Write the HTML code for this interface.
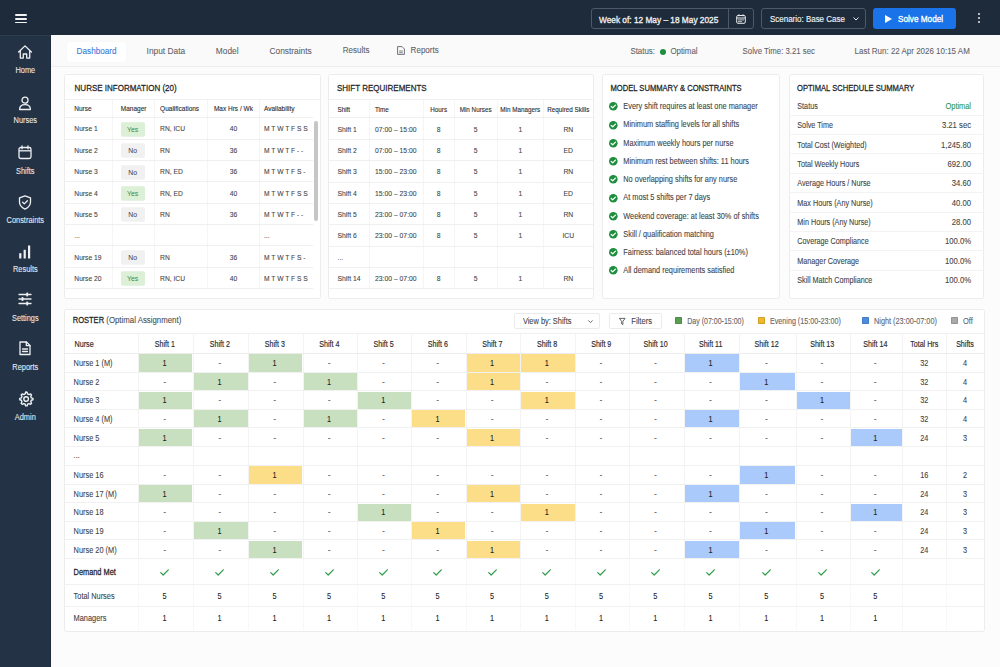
<!DOCTYPE html><html><head><meta charset="utf-8"><style>
*{margin:0;padding:0;box-sizing:border-box}
html,body{width:1000px;height:667px;overflow:hidden;background:#fcfcfc;font-family:"Liberation Sans",sans-serif}
.t{position:absolute;line-height:20px;white-space:nowrap;-webkit-text-stroke:0.08px currentColor;transform:scaleY(var(--k,1.16));transform-origin:0 10px}
.sb{-webkit-text-stroke:0.2px currentColor}
.sb2{-webkit-text-stroke:0.12px currentColor}
svg{position:absolute;overflow:visible}
</style></head><body>
<div style="position:absolute;left:0px;top:0px;width:1000px;height:35px;background:#1e2b3b"></div>
<div style="position:absolute;left:15px;top:14.4px;width:12px;height:1.5px;background:#f1f3f4;border-radius:1px"></div>
<div style="position:absolute;left:15px;top:18.1px;width:12px;height:1.5px;background:#f1f3f4;border-radius:1px"></div>
<div style="position:absolute;left:15px;top:21.9px;width:12px;height:1.5px;background:#f1f3f4;border-radius:1px"></div>
<div style="position:absolute;left:590.5px;top:8px;width:163px;height:20.6px;border:1px solid #4d5968;border-radius:3px"></div>
<div style="position:absolute;left:728px;top:8px;width:1px;height:20.6px;background:#4d5968"></div>
<div class="t" style="left:599px;top:9.50px;font-size:8.3px;color:#eef0f2;font-weight:400;-webkit-text-stroke:0.3px currentColor">Week of: 12 May – 18 May 2025</div>
<svg style="left:736px;top:14px" width="10" height="10" viewBox="0 0 10 10"><rect x="0.7" y="1.5" width="8.6" height="7.8" rx="1.2" fill="none" stroke="#e8eaed" stroke-width="1"/><line x1="0.7" y1="4" x2="9.3" y2="4" stroke="#e8eaed" stroke-width="1"/><line x1="3" y1="0.3" x2="3" y2="2.3" stroke="#e8eaed" stroke-width="1"/><line x1="7" y1="0.3" x2="7" y2="2.3" stroke="#e8eaed" stroke-width="1"/><rect x="2.3" y="5.3" width="1.4" height="1.2" fill="#e8eaed"/><rect x="4.3" y="5.3" width="1.4" height="1.2" fill="#e8eaed"/><rect x="6.3" y="5.3" width="1.4" height="1.2" fill="#e8eaed"/><rect x="2.3" y="7" width="1.4" height="1.2" fill="#e8eaed"/><rect x="4.3" y="7" width="1.4" height="1.2" fill="#e8eaed"/></svg>
<div style="position:absolute;left:761px;top:8px;width:104.5px;height:20.6px;border:1px solid #4d5968;border-radius:3px"></div>
<div class="t" style="left:770px;top:9.50px;font-size:7.98px;color:#eef0f2;font-weight:400;-webkit-text-stroke:0.14px currentColor">Scenario: Base Case</div>
<svg style="left:853px;top:17px" width="6" height="4" viewBox="0 0 6 4"><polyline points="0.5,0.5 3,3 5.5,0.5" fill="none" stroke="#e8eaed" stroke-width="1"/></svg>
<div style="position:absolute;left:873px;top:8px;width:83px;height:20.5px;background:#1a73e8;border-radius:3px"></div>
<svg style="left:885px;top:14.5px" width="7" height="8" viewBox="0 0 7 8"><polygon points="0,0 7,4 0,8" fill="#fff"/></svg>
<div class="t" style="left:898px;top:9.50px;font-size:8.2px;color:#ffffff;font-weight:400;-webkit-text-stroke:0.3px currentColor">Solve Model</div>
<div style="position:absolute;left:977.8px;top:13.299999999999999px;width:2.2px;height:2.2px;background:#e8eaed;border-radius:50%"></div>
<div style="position:absolute;left:977.8px;top:17.3px;width:2.2px;height:2.2px;background:#e8eaed;border-radius:50%"></div>
<div style="position:absolute;left:977.8px;top:21.3px;width:2.2px;height:2.2px;background:#e8eaed;border-radius:50%"></div>
<div style="position:absolute;left:0px;top:35px;width:51px;height:632px;background:#233345"></div>
<div style="position:absolute;left:0px;top:35px;width:51px;height:1px;background:#2c3d50"></div>
<div style="position:absolute;left:49.5px;top:35px;width:1.5px;height:632px;background:#1f2c3a"></div>
<svg style="left:18.2px;top:45.2px" width="14" height="14" viewBox="0 0 14 14"><path d="M0.6 7 L7 0.9 L13.4 7 M2.3 5.6 V13.1 H5.3 V9 H8.7 V13.1 H11.7 V5.6" fill="none" stroke="#eef0f2" stroke-width="1.3" stroke-linejoin="round" stroke-linecap="round"/></svg>
<div class="t" style="left:-4.70px;width:60px;text-align:center;top:60.70px;font-size:7.4px;color:#e8eaed;font-weight:400;">Home</div>
<svg style="left:18.2px;top:96.0px" width="14" height="14" viewBox="0 0 14 14"><circle cx="7" cy="4.2" r="3" fill="none" stroke="#eef0f2" stroke-width="1.3" stroke-linejoin="round" stroke-linecap="round"/><path d="M1.6 13.5 C1.6 10 4 8.6 7 8.6 C10 8.6 12.4 10 12.4 13.5 Z" fill="none" stroke="#eef0f2" stroke-width="1.3" stroke-linejoin="round" stroke-linecap="round"/></svg>
<div class="t" style="left:-4.70px;width:60px;text-align:center;top:111.30px;font-size:7.4px;color:#e8eaed;font-weight:400;">Nurses</div>
<svg style="left:18.2px;top:145.0px" width="14" height="14" viewBox="0 0 14 14"><rect x="1" y="2.5" width="12" height="11" rx="1.8" fill="none" stroke="#eef0f2" stroke-width="1.3" stroke-linejoin="round" stroke-linecap="round"/><line x1="1" y1="5.8" x2="13" y2="5.8" stroke="#eef0f2" stroke-width="1.3"/><line x1="4" y1="0.8" x2="4" y2="3.8" fill="none" stroke="#eef0f2" stroke-width="1.3" stroke-linejoin="round" stroke-linecap="round"/><line x1="10" y1="0.8" x2="10" y2="3.8" fill="none" stroke="#eef0f2" stroke-width="1.3" stroke-linejoin="round" stroke-linecap="round"/></svg>
<div class="t" style="left:-4.70px;width:60px;text-align:center;top:161.50px;font-size:7.4px;color:#e8eaed;font-weight:400;">Shifts</div>
<svg style="left:18.2px;top:194.5px" width="14" height="14" viewBox="0 0 14 14"><path d="M7 0.8 L12.5 2.8 V7 C12.5 10.5 10 12.8 7 14.2 C4 12.8 1.5 10.5 1.5 7 V2.8 Z" fill="none" stroke="#eef0f2" stroke-width="1.3" stroke-linejoin="round" stroke-linecap="round"/><polyline points="4.6,7.3 6.3,8.9 9.4,5.8" fill="none" stroke="#eef0f2" stroke-width="1.3" stroke-linejoin="round" stroke-linecap="round"/></svg>
<div class="t" style="left:-4.70px;width:60px;text-align:center;top:211.00px;font-size:7.4px;color:#e8eaed;font-weight:400;">Constraints</div>
<svg style="left:18.2px;top:244.5px" width="14" height="14" viewBox="0 0 14 14"><rect x="1.2" y="8.2" width="2.2" height="5.3" fill="#eef0f2"/><rect x="5.6" y="4.8" width="2.2" height="8.7" fill="#eef0f2"/><rect x="10" y="0.5" width="2.2" height="13" fill="#eef0f2"/></svg>
<div class="t" style="left:-4.70px;width:60px;text-align:center;top:260.30px;font-size:7.4px;color:#e8eaed;font-weight:400;">Results</div>
<svg style="left:18.2px;top:292.0px" width="14" height="14" viewBox="0 0 14 14"><line x1="1" y1="2.5" x2="13" y2="2.5" fill="none" stroke="#eef0f2" stroke-width="1.3" stroke-linejoin="round" stroke-linecap="round"/><line x1="1" y1="7" x2="13" y2="7" fill="none" stroke="#eef0f2" stroke-width="1.3" stroke-linejoin="round" stroke-linecap="round"/><line x1="1" y1="11.5" x2="13" y2="11.5" fill="none" stroke="#eef0f2" stroke-width="1.3" stroke-linejoin="round" stroke-linecap="round"/><rect x="8.3" y="0.6" width="1.8" height="3.8" fill="#eef0f2"/><rect x="3.6" y="5.1" width="1.8" height="3.8" fill="#eef0f2"/><rect x="8.3" y="9.6" width="1.8" height="3.8" fill="#eef0f2"/></svg>
<div class="t" style="left:-4.70px;width:60px;text-align:center;top:308.50px;font-size:7.4px;color:#e8eaed;font-weight:400;">Settings</div>
<svg style="left:18.2px;top:340.5px" width="14" height="14" viewBox="0 0 14 14"><path d="M2 1 H8.5 L12 4.5 V13.5 H2 Z" fill="none" stroke="#eef0f2" stroke-width="1.3" stroke-linejoin="round" stroke-linecap="round"/><polyline points="8.3,1 8.3,4.7 12,4.7" fill="none" stroke="#eef0f2" stroke-width="1.3" stroke-linejoin="round" stroke-linecap="round"/><line x1="4.5" y1="8" x2="9.5" y2="8" fill="none" stroke="#eef0f2" stroke-width="1.3" stroke-linejoin="round" stroke-linecap="round"/><line x1="4.5" y1="10.5" x2="9.5" y2="10.5" fill="none" stroke="#eef0f2" stroke-width="1.3" stroke-linejoin="round" stroke-linecap="round"/></svg>
<div class="t" style="left:-4.70px;width:60px;text-align:center;top:357.50px;font-size:7.4px;color:#e8eaed;font-weight:400;">Reports</div>
<svg style="left:17.5px;top:390.9px" width="15.4" height="15.4" viewBox="0 0 14 14"><path d="M7 0.9 L8.3 1.2 L8.7 2.7 L10 3.3 L11.4 2.6 L12.3 3.6 L11.6 5 L12.1 6.3 L13.6 6.7 V8 L12.1 8.4 L11.6 9.7 L12.3 11.1 L11.4 12.1 L10 11.4 L8.7 12 L8.3 13.5 H6.9 L6.5 12 L5.2 11.4 L3.8 12.1 L2.9 11.1 L3.6 9.7 L3.1 8.4 L1.6 8 V6.7 L3.1 6.3 L3.6 5 L2.9 3.6 L3.8 2.6 L5.2 3.3 L6.5 2.7 L6.9 1.2 Z" fill="none" stroke="#eef0f2" stroke-width="1.3" stroke-linejoin="round" stroke-linecap="round"/><circle cx="7.4" cy="7.3" r="2.1" fill="none" stroke="#eef0f2" stroke-width="1.3" stroke-linejoin="round" stroke-linecap="round"/></svg>
<div class="t" style="left:-4.70px;width:60px;text-align:center;top:407.50px;font-size:7.4px;color:#e8eaed;font-weight:400;">Admin</div>
<div style="position:absolute;left:51px;top:35px;width:949px;height:31.8px;background:#fafafa;border-bottom:1px solid #eeeeee"></div>
<div style="position:absolute;left:66.5px;top:42px;width:59.5px;height:19.6px;background:#ffffff;box-shadow:0 0 1px rgba(0,0,0,0.08);border-radius:1.5px"></div>
<div class="t" style="left:76.6px;top:41.80px;font-size:8.18px;color:#3b78d8;font-weight:400;">Dashboard</div>
<div class="t" style="left:146.6px;top:41.30px;font-size:8.35px;color:#5f6368;font-weight:400;">Input Data</div>
<div class="t" style="left:215.8px;top:41.30px;font-size:8.35px;color:#5f6368;font-weight:400;">Model</div>
<div class="t" style="left:269.5px;top:41.30px;font-size:8.35px;color:#5f6368;font-weight:400;">Constraints</div>
<div class="t" style="left:342.8px;top:41.30px;font-size:8.0px;color:#5f6368;font-weight:400;">Results</div>
<svg style="left:397px;top:45.8px" width="8" height="9" viewBox="0 0 8 9"><path d="M0.6 0.6 H5 L7.4 3 V8.4 H0.6 Z" fill="none" stroke="#5f6368" stroke-width="0.9"/><line x1="2.2" y1="5" x2="5.8" y2="5" stroke="#5f6368" stroke-width="0.8"/><line x1="2.2" y1="6.7" x2="5.8" y2="6.7" stroke="#5f6368" stroke-width="0.8"/></svg>
<div class="t" style="left:410.6px;top:41.30px;font-size:8.05px;color:#5f6368;font-weight:400;">Reports</div>
<div class="t" style="left:630.4px;top:42.00px;font-size:7.9px;color:#5f6368;font-weight:400;">Status:</div>
<div style="position:absolute;left:659.6px;top:48.5px;width:6px;height:6px;background:#1e8e3e;border-radius:50%"></div>
<div class="t" style="left:670.4px;top:42.00px;font-size:7.9px;color:#5f6368;font-weight:400;">Optimal</div>
<div class="t" style="left:742.6px;top:42.00px;font-size:7.8px;color:#5f6368;font-weight:400;">Solve Time: 3.21 sec</div>
<div class="t" style="left:854.6px;top:42.00px;font-size:7.98px;color:#5f6368;font-weight:400;">Last Run: 22 Apr 2026 10:15 AM</div>
<div style="position:absolute;left:64px;top:74px;width:256.5px;height:225px;background:#ffffff;border:1px solid #ececec;border-radius:2.5px"></div>
<div class="t" style="left:74.6px;top:78.70px;font-size:8.0px;color:#232528;font-weight:400;-webkit-text-stroke:0.22px currentColor">NURSE INFORMATION (20)</div>
<div style="position:absolute;left:64px;top:99.2px;width:256.5px;height:1px;background:#f0f0f0"></div>
<div style="position:absolute;left:64px;top:117.19999999999999px;width:248.70000000000002px;height:1px;background:#f0f0f0"></div>
<div style="position:absolute;left:112.2px;top:99.6px;width:1px;height:17.6px;background:#f5f5f5"></div>
<div class="t" style="left:74.3px;top:99.40px;font-size:6.5px;color:#2a2d30;font-weight:400;-webkit-text-stroke:0.1px currentColor">Nurse</div>
<div style="position:absolute;left:154.1px;top:99.6px;width:1px;height:17.6px;background:#f5f5f5"></div>
<div class="t" style="left:112.70px;width:41.9px;text-align:center;top:99.40px;font-size:6.5px;color:#2a2d30;font-weight:400;-webkit-text-stroke:0.1px currentColor">Manager</div>
<div style="position:absolute;left:206.8px;top:99.6px;width:1px;height:17.6px;background:#f5f5f5"></div>
<div class="t" style="left:160.1px;top:99.40px;font-size:6.5px;color:#2a2d30;font-weight:400;-webkit-text-stroke:0.1px currentColor">Qualifications</div>
<div style="position:absolute;left:259.0px;top:99.6px;width:1px;height:17.6px;background:#f5f5f5"></div>
<div class="t" style="left:207.30px;width:52.2px;text-align:center;top:99.40px;font-size:6.5px;color:#2a2d30;font-weight:400;-webkit-text-stroke:0.1px currentColor">Max Hrs / Wk</div>
<div class="t" style="left:264.0px;top:99.40px;font-size:6.5px;color:#2a2d30;font-weight:400;-webkit-text-stroke:0.1px currentColor">Availability</div>
<div style="position:absolute;left:64px;top:138.57999999999998px;width:248.70000000000002px;height:1px;background:#f0f0f0"></div>
<div style="position:absolute;left:112.2px;top:118.19999999999999px;width:1px;height:20.38px;background:#f5f5f5"></div>
<div class="t" style="left:74.3px;top:119.39px;font-size:6.7px;color:#404347;font-weight:400;">Nurse 1</div>
<div style="position:absolute;left:154.1px;top:118.19999999999999px;width:1px;height:20.38px;background:#f5f5f5"></div>
<div style="position:absolute;left:120.8px;top:118.19999999999999px;width:23.8px;height:13.2px;margin-top:4.6px;background:#dcefd7;border-radius:1.5px;color:#3d8b40;font-size:6.9px;line-height:13.2px;text-align:center;transform:scaleY(1.12)">Yes</div>
<div style="position:absolute;left:206.8px;top:118.19999999999999px;width:1px;height:20.38px;background:#f5f5f5"></div>
<div class="t" style="left:160.1px;top:119.39px;font-size:6.7px;color:#404347;font-weight:400;">RN, ICU</div>
<div style="position:absolute;left:259.0px;top:118.19999999999999px;width:1px;height:20.38px;background:#f5f5f5"></div>
<div class="t" style="left:207.30px;width:52.2px;text-align:center;top:119.39px;font-size:6.7px;color:#404347;font-weight:400;">40</div>
<div class="t" style="left:264.0px;top:119.39px;font-size:6.7px;color:#404347;font-weight:400;">M T W T F S S</div>
<div style="position:absolute;left:64px;top:159.95999999999998px;width:248.70000000000002px;height:1px;background:#f0f0f0"></div>
<div style="position:absolute;left:112.2px;top:139.57999999999998px;width:1px;height:20.38px;background:#f5f5f5"></div>
<div class="t" style="left:74.3px;top:140.77px;font-size:6.7px;color:#404347;font-weight:400;">Nurse 2</div>
<div style="position:absolute;left:154.1px;top:139.57999999999998px;width:1px;height:20.38px;background:#f5f5f5"></div>
<div style="position:absolute;left:120.8px;top:139.57999999999998px;width:23.8px;height:13.2px;margin-top:4.6px;background:#f1f1f2;border-radius:1.5px;color:#3c4043;font-size:6.9px;line-height:13.2px;text-align:center;transform:scaleY(1.12)">No</div>
<div style="position:absolute;left:206.8px;top:139.57999999999998px;width:1px;height:20.38px;background:#f5f5f5"></div>
<div class="t" style="left:160.1px;top:140.77px;font-size:6.7px;color:#404347;font-weight:400;">RN</div>
<div style="position:absolute;left:259.0px;top:139.57999999999998px;width:1px;height:20.38px;background:#f5f5f5"></div>
<div class="t" style="left:207.30px;width:52.2px;text-align:center;top:140.77px;font-size:6.7px;color:#404347;font-weight:400;">36</div>
<div class="t" style="left:264.0px;top:140.77px;font-size:6.7px;color:#404347;font-weight:400;">M T W T F - -</div>
<div style="position:absolute;left:64px;top:181.33999999999997px;width:248.70000000000002px;height:1px;background:#f0f0f0"></div>
<div style="position:absolute;left:112.2px;top:160.95999999999998px;width:1px;height:20.38px;background:#f5f5f5"></div>
<div class="t" style="left:74.3px;top:162.15px;font-size:6.7px;color:#404347;font-weight:400;">Nurse 3</div>
<div style="position:absolute;left:154.1px;top:160.95999999999998px;width:1px;height:20.38px;background:#f5f5f5"></div>
<div style="position:absolute;left:120.8px;top:160.95999999999998px;width:23.8px;height:13.2px;margin-top:4.6px;background:#f1f1f2;border-radius:1.5px;color:#3c4043;font-size:6.9px;line-height:13.2px;text-align:center;transform:scaleY(1.12)">No</div>
<div style="position:absolute;left:206.8px;top:160.95999999999998px;width:1px;height:20.38px;background:#f5f5f5"></div>
<div class="t" style="left:160.1px;top:162.15px;font-size:6.7px;color:#404347;font-weight:400;">RN, ED</div>
<div style="position:absolute;left:259.0px;top:160.95999999999998px;width:1px;height:20.38px;background:#f5f5f5"></div>
<div class="t" style="left:207.30px;width:52.2px;text-align:center;top:162.15px;font-size:6.7px;color:#404347;font-weight:400;">36</div>
<div class="t" style="left:264.0px;top:162.15px;font-size:6.7px;color:#404347;font-weight:400;">M T W T F S -</div>
<div style="position:absolute;left:64px;top:202.71999999999997px;width:248.70000000000002px;height:1px;background:#f0f0f0"></div>
<div style="position:absolute;left:112.2px;top:182.33999999999997px;width:1px;height:20.38px;background:#f5f5f5"></div>
<div class="t" style="left:74.3px;top:183.53px;font-size:6.7px;color:#404347;font-weight:400;">Nurse 4</div>
<div style="position:absolute;left:154.1px;top:182.33999999999997px;width:1px;height:20.38px;background:#f5f5f5"></div>
<div style="position:absolute;left:120.8px;top:182.33999999999997px;width:23.8px;height:13.2px;margin-top:4.6px;background:#dcefd7;border-radius:1.5px;color:#3d8b40;font-size:6.9px;line-height:13.2px;text-align:center;transform:scaleY(1.12)">Yes</div>
<div style="position:absolute;left:206.8px;top:182.33999999999997px;width:1px;height:20.38px;background:#f5f5f5"></div>
<div class="t" style="left:160.1px;top:183.53px;font-size:6.7px;color:#404347;font-weight:400;">RN, ED</div>
<div style="position:absolute;left:259.0px;top:182.33999999999997px;width:1px;height:20.38px;background:#f5f5f5"></div>
<div class="t" style="left:207.30px;width:52.2px;text-align:center;top:183.53px;font-size:6.7px;color:#404347;font-weight:400;">40</div>
<div class="t" style="left:264.0px;top:183.53px;font-size:6.7px;color:#404347;font-weight:400;">M T W T F S S</div>
<div style="position:absolute;left:64px;top:224.09999999999997px;width:248.70000000000002px;height:1px;background:#f0f0f0"></div>
<div style="position:absolute;left:112.2px;top:203.71999999999997px;width:1px;height:20.38px;background:#f5f5f5"></div>
<div class="t" style="left:74.3px;top:204.91px;font-size:6.7px;color:#404347;font-weight:400;">Nurse 5</div>
<div style="position:absolute;left:154.1px;top:203.71999999999997px;width:1px;height:20.38px;background:#f5f5f5"></div>
<div style="position:absolute;left:120.8px;top:203.71999999999997px;width:23.8px;height:13.2px;margin-top:4.6px;background:#f1f1f2;border-radius:1.5px;color:#3c4043;font-size:6.9px;line-height:13.2px;text-align:center;transform:scaleY(1.12)">No</div>
<div style="position:absolute;left:206.8px;top:203.71999999999997px;width:1px;height:20.38px;background:#f5f5f5"></div>
<div class="t" style="left:160.1px;top:204.91px;font-size:6.7px;color:#404347;font-weight:400;">RN</div>
<div style="position:absolute;left:259.0px;top:203.71999999999997px;width:1px;height:20.38px;background:#f5f5f5"></div>
<div class="t" style="left:207.30px;width:52.2px;text-align:center;top:204.91px;font-size:6.7px;color:#404347;font-weight:400;">36</div>
<div class="t" style="left:264.0px;top:204.91px;font-size:6.7px;color:#404347;font-weight:400;">M T W T F - -</div>
<div style="position:absolute;left:64px;top:245.47999999999996px;width:248.70000000000002px;height:1px;background:#f0f0f0"></div>
<div style="position:absolute;left:112.2px;top:225.09999999999997px;width:1px;height:20.38px;background:#f5f5f5"></div>
<div class="t" style="left:74.3px;top:226.29px;font-size:6.7px;color:#404347;font-weight:400;">...</div>
<div style="position:absolute;left:154.1px;top:225.09999999999997px;width:1px;height:20.38px;background:#f5f5f5"></div>
<div style="position:absolute;left:206.8px;top:225.09999999999997px;width:1px;height:20.38px;background:#f5f5f5"></div>
<div style="position:absolute;left:259.0px;top:225.09999999999997px;width:1px;height:20.38px;background:#f5f5f5"></div>
<div class="t" style="left:264.0px;top:226.29px;font-size:6.7px;color:#404347;font-weight:400;">...</div>
<div style="position:absolute;left:64px;top:266.85999999999996px;width:248.70000000000002px;height:1px;background:#f0f0f0"></div>
<div style="position:absolute;left:112.2px;top:246.47999999999996px;width:1px;height:20.38px;background:#f5f5f5"></div>
<div class="t" style="left:74.3px;top:247.67px;font-size:6.7px;color:#404347;font-weight:400;">Nurse 19</div>
<div style="position:absolute;left:154.1px;top:246.47999999999996px;width:1px;height:20.38px;background:#f5f5f5"></div>
<div style="position:absolute;left:120.8px;top:246.47999999999996px;width:23.8px;height:13.2px;margin-top:4.6px;background:#f1f1f2;border-radius:1.5px;color:#3c4043;font-size:6.9px;line-height:13.2px;text-align:center;transform:scaleY(1.12)">No</div>
<div style="position:absolute;left:206.8px;top:246.47999999999996px;width:1px;height:20.38px;background:#f5f5f5"></div>
<div class="t" style="left:160.1px;top:247.67px;font-size:6.7px;color:#404347;font-weight:400;">RN</div>
<div style="position:absolute;left:259.0px;top:246.47999999999996px;width:1px;height:20.38px;background:#f5f5f5"></div>
<div class="t" style="left:207.30px;width:52.2px;text-align:center;top:247.67px;font-size:6.7px;color:#404347;font-weight:400;">36</div>
<div class="t" style="left:264.0px;top:247.67px;font-size:6.7px;color:#404347;font-weight:400;">M T W T F S -</div>
<div style="position:absolute;left:64px;top:288.23999999999995px;width:248.70000000000002px;height:1px;background:#f0f0f0"></div>
<div style="position:absolute;left:112.2px;top:267.85999999999996px;width:1px;height:20.38px;background:#f5f5f5"></div>
<div class="t" style="left:74.3px;top:269.05px;font-size:6.7px;color:#404347;font-weight:400;">Nurse 20</div>
<div style="position:absolute;left:154.1px;top:267.85999999999996px;width:1px;height:20.38px;background:#f5f5f5"></div>
<div style="position:absolute;left:120.8px;top:267.85999999999996px;width:23.8px;height:13.2px;margin-top:4.6px;background:#dcefd7;border-radius:1.5px;color:#3d8b40;font-size:6.9px;line-height:13.2px;text-align:center;transform:scaleY(1.12)">Yes</div>
<div style="position:absolute;left:206.8px;top:267.85999999999996px;width:1px;height:20.38px;background:#f5f5f5"></div>
<div class="t" style="left:160.1px;top:269.05px;font-size:6.7px;color:#404347;font-weight:400;">RN, ICU</div>
<div style="position:absolute;left:259.0px;top:267.85999999999996px;width:1px;height:20.38px;background:#f5f5f5"></div>
<div class="t" style="left:207.30px;width:52.2px;text-align:center;top:269.05px;font-size:6.7px;color:#404347;font-weight:400;">40</div>
<div class="t" style="left:264.0px;top:269.05px;font-size:6.7px;color:#404347;font-weight:400;">M T W T F S S</div>
<div style="position:absolute;left:313.8px;top:121px;width:4.2px;height:100px;background:#c6c6c6;border-radius:2px"></div>
<div style="position:absolute;left:327.5px;top:74px;width:266.5px;height:225px;background:#ffffff;border:1px solid #ececec;border-radius:2.5px"></div>
<div class="t" style="left:337px;top:78.70px;font-size:8.0px;color:#232528;font-weight:400;-webkit-text-stroke:0.22px currentColor">SHIFT REQUIREMENTS</div>
<div style="position:absolute;left:327.5px;top:99.2px;width:266.5px;height:1px;background:#f0f0f0"></div>
<div style="position:absolute;left:327.5px;top:117.39999999999999px;width:265.5px;height:1px;background:#f0f0f0"></div>
<div style="position:absolute;left:369.0px;top:99.6px;width:1px;height:17.8px;background:#f5f5f5"></div>
<div class="t" style="left:337.5px;top:99.50px;font-size:6.3px;color:#2a2d30;font-weight:400;-webkit-text-stroke:0.1px currentColor">Shift</div>
<div style="position:absolute;left:422.5px;top:99.6px;width:1px;height:17.8px;background:#f5f5f5"></div>
<div class="t" style="left:375.0px;top:99.50px;font-size:6.3px;color:#2a2d30;font-weight:400;-webkit-text-stroke:0.1px currentColor">Time</div>
<div style="position:absolute;left:453.8px;top:99.6px;width:1px;height:17.8px;background:#f5f5f5"></div>
<div class="t" style="left:423.00px;width:31.3px;text-align:center;top:99.50px;font-size:6.3px;color:#2a2d30;font-weight:400;-webkit-text-stroke:0.1px currentColor">Hours</div>
<div style="position:absolute;left:496.5px;top:99.6px;width:1px;height:17.8px;background:#f5f5f5"></div>
<div class="t" style="left:454.30px;width:42.7px;text-align:center;top:99.50px;font-size:6.3px;color:#2a2d30;font-weight:400;-webkit-text-stroke:0.1px currentColor">Min Nurses</div>
<div style="position:absolute;left:543.1px;top:99.6px;width:1px;height:17.8px;background:#f5f5f5"></div>
<div class="t" style="left:497.00px;width:46.6px;text-align:center;top:99.50px;font-size:6.3px;color:#2a2d30;font-weight:400;-webkit-text-stroke:0.1px currentColor">Min Managers</div>
<div class="t" style="left:543.60px;width:49.4px;text-align:center;top:99.50px;font-size:6.3px;color:#2a2d30;font-weight:400;-webkit-text-stroke:0.1px currentColor">Required Skills</div>
<div style="position:absolute;left:327.5px;top:138.78px;width:265.5px;height:1px;background:#f0f0f0"></div>
<div style="position:absolute;left:369.0px;top:118.39999999999999px;width:1px;height:20.38px;background:#f5f5f5"></div>
<div class="t" style="left:337.5px;top:119.59px;font-size:6.8px;color:#404347;font-weight:400;">Shift 1</div>
<div style="position:absolute;left:422.5px;top:118.39999999999999px;width:1px;height:20.38px;background:#f5f5f5"></div>
<div class="t" style="left:375.0px;top:119.59px;font-size:6.8px;color:#404347;font-weight:400;">07:00 – 15:00</div>
<div style="position:absolute;left:453.8px;top:118.39999999999999px;width:1px;height:20.38px;background:#f5f5f5"></div>
<div class="t" style="left:423.00px;width:31.3px;text-align:center;top:119.59px;font-size:6.8px;color:#404347;font-weight:400;">8</div>
<div style="position:absolute;left:496.5px;top:118.39999999999999px;width:1px;height:20.38px;background:#f5f5f5"></div>
<div class="t" style="left:454.30px;width:42.7px;text-align:center;top:119.59px;font-size:6.8px;color:#404347;font-weight:400;">5</div>
<div style="position:absolute;left:543.1px;top:118.39999999999999px;width:1px;height:20.38px;background:#f5f5f5"></div>
<div class="t" style="left:497.00px;width:46.6px;text-align:center;top:119.59px;font-size:6.8px;color:#404347;font-weight:400;">1</div>
<div class="t" style="left:543.60px;width:49.4px;text-align:center;top:119.59px;font-size:6.8px;color:#404347;font-weight:400;">RN</div>
<div style="position:absolute;left:327.5px;top:160.16px;width:265.5px;height:1px;background:#f0f0f0"></div>
<div style="position:absolute;left:369.0px;top:139.78px;width:1px;height:20.38px;background:#f5f5f5"></div>
<div class="t" style="left:337.5px;top:140.97px;font-size:6.8px;color:#404347;font-weight:400;">Shift 2</div>
<div style="position:absolute;left:422.5px;top:139.78px;width:1px;height:20.38px;background:#f5f5f5"></div>
<div class="t" style="left:375.0px;top:140.97px;font-size:6.8px;color:#404347;font-weight:400;">07:00 – 15:00</div>
<div style="position:absolute;left:453.8px;top:139.78px;width:1px;height:20.38px;background:#f5f5f5"></div>
<div class="t" style="left:423.00px;width:31.3px;text-align:center;top:140.97px;font-size:6.8px;color:#404347;font-weight:400;">8</div>
<div style="position:absolute;left:496.5px;top:139.78px;width:1px;height:20.38px;background:#f5f5f5"></div>
<div class="t" style="left:454.30px;width:42.7px;text-align:center;top:140.97px;font-size:6.8px;color:#404347;font-weight:400;">5</div>
<div style="position:absolute;left:543.1px;top:139.78px;width:1px;height:20.38px;background:#f5f5f5"></div>
<div class="t" style="left:497.00px;width:46.6px;text-align:center;top:140.97px;font-size:6.8px;color:#404347;font-weight:400;">1</div>
<div class="t" style="left:543.60px;width:49.4px;text-align:center;top:140.97px;font-size:6.8px;color:#404347;font-weight:400;">ED</div>
<div style="position:absolute;left:327.5px;top:181.54px;width:265.5px;height:1px;background:#f0f0f0"></div>
<div style="position:absolute;left:369.0px;top:161.16px;width:1px;height:20.38px;background:#f5f5f5"></div>
<div class="t" style="left:337.5px;top:162.35px;font-size:6.8px;color:#404347;font-weight:400;">Shift 3</div>
<div style="position:absolute;left:422.5px;top:161.16px;width:1px;height:20.38px;background:#f5f5f5"></div>
<div class="t" style="left:375.0px;top:162.35px;font-size:6.8px;color:#404347;font-weight:400;">15:00 – 23:00</div>
<div style="position:absolute;left:453.8px;top:161.16px;width:1px;height:20.38px;background:#f5f5f5"></div>
<div class="t" style="left:423.00px;width:31.3px;text-align:center;top:162.35px;font-size:6.8px;color:#404347;font-weight:400;">8</div>
<div style="position:absolute;left:496.5px;top:161.16px;width:1px;height:20.38px;background:#f5f5f5"></div>
<div class="t" style="left:454.30px;width:42.7px;text-align:center;top:162.35px;font-size:6.8px;color:#404347;font-weight:400;">5</div>
<div style="position:absolute;left:543.1px;top:161.16px;width:1px;height:20.38px;background:#f5f5f5"></div>
<div class="t" style="left:497.00px;width:46.6px;text-align:center;top:162.35px;font-size:6.8px;color:#404347;font-weight:400;">1</div>
<div class="t" style="left:543.60px;width:49.4px;text-align:center;top:162.35px;font-size:6.8px;color:#404347;font-weight:400;">RN</div>
<div style="position:absolute;left:327.5px;top:202.92px;width:265.5px;height:1px;background:#f0f0f0"></div>
<div style="position:absolute;left:369.0px;top:182.54px;width:1px;height:20.38px;background:#f5f5f5"></div>
<div class="t" style="left:337.5px;top:183.73px;font-size:6.8px;color:#404347;font-weight:400;">Shift 4</div>
<div style="position:absolute;left:422.5px;top:182.54px;width:1px;height:20.38px;background:#f5f5f5"></div>
<div class="t" style="left:375.0px;top:183.73px;font-size:6.8px;color:#404347;font-weight:400;">15:00 – 23:00</div>
<div style="position:absolute;left:453.8px;top:182.54px;width:1px;height:20.38px;background:#f5f5f5"></div>
<div class="t" style="left:423.00px;width:31.3px;text-align:center;top:183.73px;font-size:6.8px;color:#404347;font-weight:400;">8</div>
<div style="position:absolute;left:496.5px;top:182.54px;width:1px;height:20.38px;background:#f5f5f5"></div>
<div class="t" style="left:454.30px;width:42.7px;text-align:center;top:183.73px;font-size:6.8px;color:#404347;font-weight:400;">5</div>
<div style="position:absolute;left:543.1px;top:182.54px;width:1px;height:20.38px;background:#f5f5f5"></div>
<div class="t" style="left:497.00px;width:46.6px;text-align:center;top:183.73px;font-size:6.8px;color:#404347;font-weight:400;">1</div>
<div class="t" style="left:543.60px;width:49.4px;text-align:center;top:183.73px;font-size:6.8px;color:#404347;font-weight:400;">ED</div>
<div style="position:absolute;left:327.5px;top:224.29999999999998px;width:265.5px;height:1px;background:#f0f0f0"></div>
<div style="position:absolute;left:369.0px;top:203.92px;width:1px;height:20.38px;background:#f5f5f5"></div>
<div class="t" style="left:337.5px;top:205.11px;font-size:6.8px;color:#404347;font-weight:400;">Shift 5</div>
<div style="position:absolute;left:422.5px;top:203.92px;width:1px;height:20.38px;background:#f5f5f5"></div>
<div class="t" style="left:375.0px;top:205.11px;font-size:6.8px;color:#404347;font-weight:400;">23:00 – 07:00</div>
<div style="position:absolute;left:453.8px;top:203.92px;width:1px;height:20.38px;background:#f5f5f5"></div>
<div class="t" style="left:423.00px;width:31.3px;text-align:center;top:205.11px;font-size:6.8px;color:#404347;font-weight:400;">8</div>
<div style="position:absolute;left:496.5px;top:203.92px;width:1px;height:20.38px;background:#f5f5f5"></div>
<div class="t" style="left:454.30px;width:42.7px;text-align:center;top:205.11px;font-size:6.8px;color:#404347;font-weight:400;">5</div>
<div style="position:absolute;left:543.1px;top:203.92px;width:1px;height:20.38px;background:#f5f5f5"></div>
<div class="t" style="left:497.00px;width:46.6px;text-align:center;top:205.11px;font-size:6.8px;color:#404347;font-weight:400;">1</div>
<div class="t" style="left:543.60px;width:49.4px;text-align:center;top:205.11px;font-size:6.8px;color:#404347;font-weight:400;">RN</div>
<div style="position:absolute;left:327.5px;top:245.67999999999998px;width:265.5px;height:1px;background:#f0f0f0"></div>
<div style="position:absolute;left:369.0px;top:225.29999999999998px;width:1px;height:20.38px;background:#f5f5f5"></div>
<div class="t" style="left:337.5px;top:226.49px;font-size:6.8px;color:#404347;font-weight:400;">Shift 6</div>
<div style="position:absolute;left:422.5px;top:225.29999999999998px;width:1px;height:20.38px;background:#f5f5f5"></div>
<div class="t" style="left:375.0px;top:226.49px;font-size:6.8px;color:#404347;font-weight:400;">23:00 – 07:00</div>
<div style="position:absolute;left:453.8px;top:225.29999999999998px;width:1px;height:20.38px;background:#f5f5f5"></div>
<div class="t" style="left:423.00px;width:31.3px;text-align:center;top:226.49px;font-size:6.8px;color:#404347;font-weight:400;">8</div>
<div style="position:absolute;left:496.5px;top:225.29999999999998px;width:1px;height:20.38px;background:#f5f5f5"></div>
<div class="t" style="left:454.30px;width:42.7px;text-align:center;top:226.49px;font-size:6.8px;color:#404347;font-weight:400;">5</div>
<div style="position:absolute;left:543.1px;top:225.29999999999998px;width:1px;height:20.38px;background:#f5f5f5"></div>
<div class="t" style="left:497.00px;width:46.6px;text-align:center;top:226.49px;font-size:6.8px;color:#404347;font-weight:400;">1</div>
<div class="t" style="left:543.60px;width:49.4px;text-align:center;top:226.49px;font-size:6.8px;color:#404347;font-weight:400;">ICU</div>
<div style="position:absolute;left:327.5px;top:267.06px;width:265.5px;height:1px;background:#f0f0f0"></div>
<div style="position:absolute;left:369.0px;top:246.67999999999998px;width:1px;height:20.38px;background:#f5f5f5"></div>
<div class="t" style="left:337.5px;top:247.87px;font-size:6.8px;color:#404347;font-weight:400;">...</div>
<div style="position:absolute;left:422.5px;top:246.67999999999998px;width:1px;height:20.38px;background:#f5f5f5"></div>
<div style="position:absolute;left:453.8px;top:246.67999999999998px;width:1px;height:20.38px;background:#f5f5f5"></div>
<div style="position:absolute;left:496.5px;top:246.67999999999998px;width:1px;height:20.38px;background:#f5f5f5"></div>
<div style="position:absolute;left:543.1px;top:246.67999999999998px;width:1px;height:20.38px;background:#f5f5f5"></div>
<div style="position:absolute;left:327.5px;top:288.44px;width:265.5px;height:1px;background:#f0f0f0"></div>
<div style="position:absolute;left:369.0px;top:268.06px;width:1px;height:20.38px;background:#f5f5f5"></div>
<div class="t" style="left:337.5px;top:269.25px;font-size:6.8px;color:#404347;font-weight:400;">Shift 14</div>
<div style="position:absolute;left:422.5px;top:268.06px;width:1px;height:20.38px;background:#f5f5f5"></div>
<div class="t" style="left:375.0px;top:269.25px;font-size:6.8px;color:#404347;font-weight:400;">23:00 – 07:00</div>
<div style="position:absolute;left:453.8px;top:268.06px;width:1px;height:20.38px;background:#f5f5f5"></div>
<div class="t" style="left:423.00px;width:31.3px;text-align:center;top:269.25px;font-size:6.8px;color:#404347;font-weight:400;">8</div>
<div style="position:absolute;left:496.5px;top:268.06px;width:1px;height:20.38px;background:#f5f5f5"></div>
<div class="t" style="left:454.30px;width:42.7px;text-align:center;top:269.25px;font-size:6.8px;color:#404347;font-weight:400;">5</div>
<div style="position:absolute;left:543.1px;top:268.06px;width:1px;height:20.38px;background:#f5f5f5"></div>
<div class="t" style="left:497.00px;width:46.6px;text-align:center;top:269.25px;font-size:6.8px;color:#404347;font-weight:400;">1</div>
<div class="t" style="left:543.60px;width:49.4px;text-align:center;top:269.25px;font-size:6.8px;color:#404347;font-weight:400;">RN</div>
<div style="position:absolute;left:602px;top:74px;width:178px;height:225px;background:#ffffff;border:1px solid #ececec;border-radius:2.5px"></div>
<div class="t" style="left:610.5px;top:78.70px;font-size:7.6px;color:#232528;font-weight:400;-webkit-text-stroke:0.22px currentColor">MODEL SUMMARY &amp; CONSTRAINTS</div>
<svg style="left:609.1px;top:102.30px" width="8.6" height="8.6" viewBox="0 0 10 10"><circle cx="5" cy="5" r="5" fill="#1e8e3e"/><polyline points="2.6,5.2 4.3,6.8 7.5,3.6" fill="none" stroke="#fff" stroke-width="1.5" stroke-linecap="round" stroke-linejoin="round"/></svg>
<div class="t" style="left:623.3px;top:97.10px;font-size:7.38px;color:#404347;font-weight:400;">Every shift requires at least one manager</div>
<svg style="left:609.1px;top:120.54px" width="8.6" height="8.6" viewBox="0 0 10 10"><circle cx="5" cy="5" r="5" fill="#1e8e3e"/><polyline points="2.6,5.2 4.3,6.8 7.5,3.6" fill="none" stroke="#fff" stroke-width="1.5" stroke-linecap="round" stroke-linejoin="round"/></svg>
<div class="t" style="left:623.3px;top:115.34px;font-size:7.38px;color:#404347;font-weight:400;">Minimum staffing levels for all shifts</div>
<svg style="left:609.1px;top:138.78px" width="8.6" height="8.6" viewBox="0 0 10 10"><circle cx="5" cy="5" r="5" fill="#1e8e3e"/><polyline points="2.6,5.2 4.3,6.8 7.5,3.6" fill="none" stroke="#fff" stroke-width="1.5" stroke-linecap="round" stroke-linejoin="round"/></svg>
<div class="t" style="left:623.3px;top:133.58px;font-size:7.38px;color:#404347;font-weight:400;">Maximum weekly hours per nurse</div>
<svg style="left:609.1px;top:157.02px" width="8.6" height="8.6" viewBox="0 0 10 10"><circle cx="5" cy="5" r="5" fill="#1e8e3e"/><polyline points="2.6,5.2 4.3,6.8 7.5,3.6" fill="none" stroke="#fff" stroke-width="1.5" stroke-linecap="round" stroke-linejoin="round"/></svg>
<div class="t" style="left:623.3px;top:151.82px;font-size:7.38px;color:#404347;font-weight:400;">Minimum rest between shifts: 11 hours</div>
<svg style="left:609.1px;top:175.26px" width="8.6" height="8.6" viewBox="0 0 10 10"><circle cx="5" cy="5" r="5" fill="#1e8e3e"/><polyline points="2.6,5.2 4.3,6.8 7.5,3.6" fill="none" stroke="#fff" stroke-width="1.5" stroke-linecap="round" stroke-linejoin="round"/></svg>
<div class="t" style="left:623.3px;top:170.06px;font-size:7.38px;color:#404347;font-weight:400;">No overlapping shifts for any nurse</div>
<svg style="left:609.1px;top:193.50px" width="8.6" height="8.6" viewBox="0 0 10 10"><circle cx="5" cy="5" r="5" fill="#1e8e3e"/><polyline points="2.6,5.2 4.3,6.8 7.5,3.6" fill="none" stroke="#fff" stroke-width="1.5" stroke-linecap="round" stroke-linejoin="round"/></svg>
<div class="t" style="left:623.3px;top:188.30px;font-size:7.38px;color:#404347;font-weight:400;">At most 5 shifts per 7 days</div>
<svg style="left:609.1px;top:211.74px" width="8.6" height="8.6" viewBox="0 0 10 10"><circle cx="5" cy="5" r="5" fill="#1e8e3e"/><polyline points="2.6,5.2 4.3,6.8 7.5,3.6" fill="none" stroke="#fff" stroke-width="1.5" stroke-linecap="round" stroke-linejoin="round"/></svg>
<div class="t" style="left:623.3px;top:206.54px;font-size:7.38px;color:#404347;font-weight:400;">Weekend coverage: at least 30% of shifts</div>
<svg style="left:609.1px;top:229.98px" width="8.6" height="8.6" viewBox="0 0 10 10"><circle cx="5" cy="5" r="5" fill="#1e8e3e"/><polyline points="2.6,5.2 4.3,6.8 7.5,3.6" fill="none" stroke="#fff" stroke-width="1.5" stroke-linecap="round" stroke-linejoin="round"/></svg>
<div class="t" style="left:623.3px;top:224.78px;font-size:7.38px;color:#404347;font-weight:400;">Skill / qualification matching</div>
<svg style="left:609.1px;top:248.22px" width="8.6" height="8.6" viewBox="0 0 10 10"><circle cx="5" cy="5" r="5" fill="#1e8e3e"/><polyline points="2.6,5.2 4.3,6.8 7.5,3.6" fill="none" stroke="#fff" stroke-width="1.5" stroke-linecap="round" stroke-linejoin="round"/></svg>
<div class="t" style="left:623.3px;top:243.02px;font-size:7.38px;color:#404347;font-weight:400;">Fairness: balanced total hours (±10%)</div>
<svg style="left:609.1px;top:266.46px" width="8.6" height="8.6" viewBox="0 0 10 10"><circle cx="5" cy="5" r="5" fill="#1e8e3e"/><polyline points="2.6,5.2 4.3,6.8 7.5,3.6" fill="none" stroke="#fff" stroke-width="1.5" stroke-linecap="round" stroke-linejoin="round"/></svg>
<div class="t" style="left:623.3px;top:261.26px;font-size:7.38px;color:#404347;font-weight:400;">All demand requirements satisfied</div>
<div style="position:absolute;left:789px;top:74px;width:195px;height:225px;background:#ffffff;border:1px solid #ececec;border-radius:2.5px"></div>
<div class="t" style="left:797px;top:78.70px;font-size:7.6px;color:#232528;font-weight:400;-webkit-text-stroke:0.22px currentColor">OPTIMAL SCHEDULE SUMMARY</div>
<div class="t" style="left:797.3px;top:96.80px;font-size:7.23px;color:#404347;font-weight:400;">Status</div>
<div class="t" style="left:871.00px;width:100px;text-align:right;top:96.80px;font-size:7.4px;color:#2f9444;font-weight:400;">Optimal</div>
<div style="position:absolute;left:789px;top:114.67999999999999px;width:195px;height:1px;background:#f3f3f3"></div>
<div class="t" style="left:797.3px;top:116.18px;font-size:7.23px;color:#404347;font-weight:400;">Solve Time</div>
<div class="t" style="left:871.00px;width:100px;text-align:right;top:116.18px;font-size:7.7px;color:#404347;font-weight:400;">3.21 sec</div>
<div style="position:absolute;left:789px;top:134.06px;width:195px;height:1px;background:#f3f3f3"></div>
<div class="t" style="left:797.3px;top:135.56px;font-size:7.23px;color:#404347;font-weight:400;">Total Cost (Weighted)</div>
<div class="t" style="left:871.00px;width:100px;text-align:right;top:135.56px;font-size:7.7px;color:#404347;font-weight:400;">1,245.80</div>
<div style="position:absolute;left:789px;top:153.44px;width:195px;height:1px;background:#f3f3f3"></div>
<div class="t" style="left:797.3px;top:154.94px;font-size:7.23px;color:#404347;font-weight:400;">Total Weekly Hours</div>
<div class="t" style="left:871.00px;width:100px;text-align:right;top:154.94px;font-size:7.7px;color:#404347;font-weight:400;">692.00</div>
<div style="position:absolute;left:789px;top:172.82px;width:195px;height:1px;background:#f3f3f3"></div>
<div class="t" style="left:797.3px;top:174.32px;font-size:7.23px;color:#404347;font-weight:400;">Average Hours / Nurse</div>
<div class="t" style="left:871.00px;width:100px;text-align:right;top:174.32px;font-size:7.7px;color:#404347;font-weight:400;">34.60</div>
<div style="position:absolute;left:789px;top:192.2px;width:195px;height:1px;background:#f3f3f3"></div>
<div class="t" style="left:797.3px;top:193.70px;font-size:7.23px;color:#404347;font-weight:400;">Max Hours (Any Nurse)</div>
<div class="t" style="left:871.00px;width:100px;text-align:right;top:193.70px;font-size:7.7px;color:#404347;font-weight:400;">40.00</div>
<div style="position:absolute;left:789px;top:211.57999999999998px;width:195px;height:1px;background:#f3f3f3"></div>
<div class="t" style="left:797.3px;top:213.08px;font-size:7.23px;color:#404347;font-weight:400;">Min Hours (Any Nurse)</div>
<div class="t" style="left:871.00px;width:100px;text-align:right;top:213.08px;font-size:7.7px;color:#404347;font-weight:400;">28.00</div>
<div style="position:absolute;left:789px;top:230.95999999999998px;width:195px;height:1px;background:#f3f3f3"></div>
<div class="t" style="left:797.3px;top:232.46px;font-size:7.23px;color:#404347;font-weight:400;">Coverage Compliance</div>
<div class="t" style="left:871.00px;width:100px;text-align:right;top:232.46px;font-size:7.7px;color:#404347;font-weight:400;">100.0%</div>
<div style="position:absolute;left:789px;top:250.33999999999997px;width:195px;height:1px;background:#f3f3f3"></div>
<div class="t" style="left:797.3px;top:251.84px;font-size:7.23px;color:#404347;font-weight:400;">Manager Coverage</div>
<div class="t" style="left:871.00px;width:100px;text-align:right;top:251.84px;font-size:7.7px;color:#404347;font-weight:400;">100.0%</div>
<div style="position:absolute;left:789px;top:269.71999999999997px;width:195px;height:1px;background:#f3f3f3"></div>
<div class="t" style="left:797.3px;top:271.22px;font-size:7.23px;color:#404347;font-weight:400;">Skill Match Compliance</div>
<div class="t" style="left:871.00px;width:100px;text-align:right;top:271.22px;font-size:7.7px;color:#404347;font-weight:400;">100.0%</div>
<div style="position:absolute;left:64px;top:309px;width:921px;height:322.5px;background:#ffffff;border:1px solid #ececec;border-radius:2.5px"></div>
<div class="t" style="left:72.7px;top:310.90px;font-size:7.54px;color:#232528;font-weight:400;-webkit-text-stroke:0.22px currentColor">ROSTER</div>
<div class="t" style="left:106.3px;top:310.90px;font-size:7.85px;color:#4a4d51;font-weight:400;">(Optimal Assignment)</div>
<div style="position:absolute;left:64px;top:332.6px;width:920px;height:1px;background:#f0f0f0"></div>
<div style="position:absolute;left:513.5px;top:312.8px;width:86.5px;height:16.5px;background:#fff;border:1px solid #ebebeb;border-radius:2px"></div>
<div class="t" style="left:522.9px;top:311.50px;font-size:7.43px;color:#404347;font-weight:400;">View by: Shifts</div>
<svg style="left:587.5px;top:319.5px" width="5" height="3.2" viewBox="0 0 5 3.2"><polyline points="0.4,0.4 2.5,2.6 4.6,0.4" fill="none" stroke="#5f6368" stroke-width="0.9"/></svg>
<div style="position:absolute;left:609px;top:312.8px;width:52.7px;height:16.5px;background:#fff;border:1px solid #ebebeb;border-radius:2px"></div>
<svg style="left:619px;top:317.6px" width="6.5" height="7" viewBox="0 0 6.5 7"><path d="M0.4 0.4 H6.1 L3.9 3.3 V6.6 L2.6 5.8 V3.3 Z" fill="none" stroke="#3c4043" stroke-width="0.8" stroke-linejoin="round"/></svg>
<div class="t" style="left:631.3px;top:311.50px;font-size:7.6px;color:#404347;font-weight:400;">Filters</div>
<div style="position:absolute;left:674.5px;top:317.2px;width:7.2px;height:7.2px;background:#5a9e52;border:0.6px solid rgba(0,0,0,0.12);border-radius:0.8px"></div>
<div class="t" style="left:687.2px;top:311.50px;font-size:7.04px;color:#5f6368;font-weight:400;">Day (07:00-15:00)</div>
<div style="position:absolute;left:757.5px;top:317.2px;width:7.2px;height:7.2px;background:#efb72d;border:0.6px solid rgba(0,0,0,0.12);border-radius:0.8px"></div>
<div class="t" style="left:770px;top:311.50px;font-size:7.17px;color:#5f6368;font-weight:400;">Evening (15:00-23:00)</div>
<div style="position:absolute;left:861.5px;top:317.2px;width:7.2px;height:7.2px;background:#4a8de0;border:0.6px solid rgba(0,0,0,0.12);border-radius:0.8px"></div>
<div class="t" style="left:874px;top:311.50px;font-size:7.3px;color:#5f6368;font-weight:400;">Night (23:00-07:00)</div>
<div style="position:absolute;left:951.1999999999999px;top:317.2px;width:7.2px;height:7.2px;background:#a9a9a9;border:0.6px solid rgba(0,0,0,0.12);border-radius:0.8px"></div>
<div class="t" style="left:963px;top:311.50px;font-size:7.5px;color:#5f6368;font-weight:400;">Off</div>
<div style="position:absolute;left:64px;top:352.9px;width:920px;height:1px;background:#ececec"></div>
<div class="t" style="left:74.5px;top:335.05px;font-size:7.2px;color:#2a2d30;font-weight:400;-webkit-text-stroke:0.14px currentColor">Nurse</div>
<div style="position:absolute;left:138.2px;top:333.2px;width:1px;height:19.7px;background:#f3f3f3"></div>
<div class="t" style="left:137.85px;width:54px;text-align:center;top:335.05px;font-size:7.1px;color:#2a2d30;font-weight:400;-webkit-text-stroke:0.14px currentColor">Shift 1</div>
<div style="position:absolute;left:192.5px;top:333.2px;width:1px;height:19.7px;background:#f3f3f3"></div>
<div class="t" style="left:192.80px;width:54px;text-align:center;top:335.05px;font-size:7.1px;color:#2a2d30;font-weight:400;-webkit-text-stroke:0.14px currentColor">Shift 2</div>
<div style="position:absolute;left:248.1px;top:333.2px;width:1px;height:19.7px;background:#f3f3f3"></div>
<div class="t" style="left:247.80px;width:54px;text-align:center;top:335.05px;font-size:7.1px;color:#2a2d30;font-weight:400;-webkit-text-stroke:0.14px currentColor">Shift 3</div>
<div style="position:absolute;left:302.5px;top:333.2px;width:1px;height:19.7px;background:#f3f3f3"></div>
<div class="t" style="left:302.30px;width:54px;text-align:center;top:335.05px;font-size:7.1px;color:#2a2d30;font-weight:400;-webkit-text-stroke:0.14px currentColor">Shift 4</div>
<div style="position:absolute;left:357.1px;top:333.2px;width:1px;height:19.7px;background:#f3f3f3"></div>
<div class="t" style="left:356.60px;width:54px;text-align:center;top:335.05px;font-size:7.1px;color:#2a2d30;font-weight:400;-webkit-text-stroke:0.14px currentColor">Shift 5</div>
<div style="position:absolute;left:411.1px;top:333.2px;width:1px;height:19.7px;background:#f3f3f3"></div>
<div class="t" style="left:410.80px;width:54px;text-align:center;top:335.05px;font-size:7.1px;color:#2a2d30;font-weight:400;-webkit-text-stroke:0.14px currentColor">Shift 6</div>
<div style="position:absolute;left:465.5px;top:333.2px;width:1px;height:19.7px;background:#f3f3f3"></div>
<div class="t" style="left:465.30px;width:54px;text-align:center;top:335.05px;font-size:7.1px;color:#2a2d30;font-weight:400;-webkit-text-stroke:0.14px currentColor">Shift 7</div>
<div style="position:absolute;left:520.1px;top:333.2px;width:1px;height:19.7px;background:#f3f3f3"></div>
<div class="t" style="left:520.05px;width:54px;text-align:center;top:335.05px;font-size:7.1px;color:#2a2d30;font-weight:400;-webkit-text-stroke:0.14px currentColor">Shift 8</div>
<div style="position:absolute;left:575.0px;top:333.2px;width:1px;height:19.7px;background:#f3f3f3"></div>
<div class="t" style="left:574.25px;width:54px;text-align:center;top:335.05px;font-size:7.1px;color:#2a2d30;font-weight:400;-webkit-text-stroke:0.14px currentColor">Shift 9</div>
<div style="position:absolute;left:628.5px;top:333.2px;width:1px;height:19.7px;background:#f3f3f3"></div>
<div class="t" style="left:628.60px;width:54px;text-align:center;top:335.05px;font-size:7.1px;color:#2a2d30;font-weight:400;-webkit-text-stroke:0.14px currentColor">Shift 10</div>
<div style="position:absolute;left:683.7px;top:333.2px;width:1px;height:19.7px;background:#f3f3f3"></div>
<div class="t" style="left:683.70px;width:54px;text-align:center;top:335.05px;font-size:7.1px;color:#2a2d30;font-weight:400;-webkit-text-stroke:0.14px currentColor">Shift 11</div>
<div style="position:absolute;left:738.7px;top:333.2px;width:1px;height:19.7px;background:#f3f3f3"></div>
<div class="t" style="left:739.60px;width:54px;text-align:center;top:335.05px;font-size:7.1px;color:#2a2d30;font-weight:400;-webkit-text-stroke:0.14px currentColor">Shift 12</div>
<div style="position:absolute;left:795.5px;top:333.2px;width:1px;height:19.7px;background:#f3f3f3"></div>
<div class="t" style="left:795.20px;width:54px;text-align:center;top:335.05px;font-size:7.1px;color:#2a2d30;font-weight:400;-webkit-text-stroke:0.14px currentColor">Shift 13</div>
<div style="position:absolute;left:849.9px;top:333.2px;width:1px;height:19.7px;background:#f3f3f3"></div>
<div class="t" style="left:848.40px;width:54px;text-align:center;top:335.05px;font-size:7.1px;color:#2a2d30;font-weight:400;-webkit-text-stroke:0.14px currentColor">Shift 14</div>
<div style="position:absolute;left:901.9px;top:333.2px;width:1px;height:19.7px;background:#f3f3f3"></div>
<div class="t" style="left:902.20px;width:44px;text-align:center;top:335.05px;font-size:7.1px;color:#2a2d30;font-weight:400;-webkit-text-stroke:0.14px currentColor">Total Hrs</div>
<div style="position:absolute;left:945.5px;top:333.2px;width:1px;height:19.7px;background:#f3f3f3"></div>
<div class="t" style="left:945.00px;width:40px;text-align:center;top:335.05px;font-size:7.1px;color:#2a2d30;font-weight:400;-webkit-text-stroke:0.14px currentColor">Shifts</div>
<div style="position:absolute;left:64px;top:371.52px;width:920px;height:1px;background:#f1f1f1"></div>
<div class="t" style="left:73.6px;top:354.21px;font-size:7.39px;color:#404347;font-weight:400;">Nurse 1 (M)</div>
<div style="position:absolute;left:138.2px;top:353.9px;width:1px;height:17.62px;background:#f3f3f3"></div>
<div style="position:absolute;left:139.2px;top:354.4px;width:53.30000000000001px;height:17.12px;background:#c8e0c0"></div>
<div class="t" style="left:144.65px;width:40px;text-align:center;top:354.21px;font-size:7.3px;color:#202124;font-weight:400;">1</div>
<div style="position:absolute;left:192.5px;top:353.9px;width:1px;height:17.62px;background:#f3f3f3"></div>
<div class="t" style="left:199.60px;width:40px;text-align:center;top:354.21px;font-size:7.3px;color:#5f6368;font-weight:400;">-</div>
<div style="position:absolute;left:248.1px;top:353.9px;width:1px;height:17.62px;background:#f3f3f3"></div>
<div style="position:absolute;left:249.1px;top:354.4px;width:53.400000000000006px;height:17.12px;background:#c8e0c0"></div>
<div class="t" style="left:254.60px;width:40px;text-align:center;top:354.21px;font-size:7.3px;color:#202124;font-weight:400;">1</div>
<div style="position:absolute;left:302.5px;top:353.9px;width:1px;height:17.62px;background:#f3f3f3"></div>
<div class="t" style="left:309.10px;width:40px;text-align:center;top:354.21px;font-size:7.3px;color:#5f6368;font-weight:400;">-</div>
<div style="position:absolute;left:357.1px;top:353.9px;width:1px;height:17.62px;background:#f3f3f3"></div>
<div class="t" style="left:363.40px;width:40px;text-align:center;top:354.21px;font-size:7.3px;color:#5f6368;font-weight:400;">-</div>
<div style="position:absolute;left:411.1px;top:353.9px;width:1px;height:17.62px;background:#f3f3f3"></div>
<div class="t" style="left:417.60px;width:40px;text-align:center;top:354.21px;font-size:7.3px;color:#5f6368;font-weight:400;">-</div>
<div style="position:absolute;left:465.5px;top:353.9px;width:1px;height:17.62px;background:#f3f3f3"></div>
<div style="position:absolute;left:466.5px;top:354.4px;width:53.60000000000002px;height:17.12px;background:#fcdd88"></div>
<div class="t" style="left:472.10px;width:40px;text-align:center;top:354.21px;font-size:7.3px;color:#202124;font-weight:400;">1</div>
<div style="position:absolute;left:520.1px;top:353.9px;width:1px;height:17.62px;background:#f3f3f3"></div>
<div style="position:absolute;left:521.1px;top:354.4px;width:53.89999999999998px;height:17.12px;background:#fcdd88"></div>
<div class="t" style="left:526.85px;width:40px;text-align:center;top:354.21px;font-size:7.3px;color:#202124;font-weight:400;">1</div>
<div style="position:absolute;left:575.0px;top:353.9px;width:1px;height:17.62px;background:#f3f3f3"></div>
<div class="t" style="left:581.05px;width:40px;text-align:center;top:354.21px;font-size:7.3px;color:#5f6368;font-weight:400;">-</div>
<div style="position:absolute;left:628.5px;top:353.9px;width:1px;height:17.62px;background:#f3f3f3"></div>
<div class="t" style="left:635.40px;width:40px;text-align:center;top:354.21px;font-size:7.3px;color:#5f6368;font-weight:400;">-</div>
<div style="position:absolute;left:683.7px;top:353.9px;width:1px;height:17.62px;background:#f3f3f3"></div>
<div style="position:absolute;left:684.7px;top:354.4px;width:54.0px;height:17.12px;background:#a9cafb"></div>
<div class="t" style="left:690.50px;width:40px;text-align:center;top:354.21px;font-size:7.3px;color:#202124;font-weight:400;">1</div>
<div style="position:absolute;left:738.7px;top:353.9px;width:1px;height:17.62px;background:#f3f3f3"></div>
<div class="t" style="left:746.40px;width:40px;text-align:center;top:354.21px;font-size:7.3px;color:#5f6368;font-weight:400;">-</div>
<div style="position:absolute;left:795.5px;top:353.9px;width:1px;height:17.62px;background:#f3f3f3"></div>
<div class="t" style="left:802.00px;width:40px;text-align:center;top:354.21px;font-size:7.3px;color:#5f6368;font-weight:400;">-</div>
<div style="position:absolute;left:849.9px;top:353.9px;width:1px;height:17.62px;background:#f3f3f3"></div>
<div class="t" style="left:855.20px;width:40px;text-align:center;top:354.21px;font-size:7.3px;color:#5f6368;font-weight:400;">-</div>
<div style="position:absolute;left:901.9px;top:353.9px;width:1px;height:17.62px;background:#f3f3f3"></div>
<div class="t" style="left:904.20px;width:40px;text-align:center;top:354.21px;font-size:7.3px;color:#404347;font-weight:400;">32</div>
<div style="position:absolute;left:945.5px;top:353.9px;width:1px;height:17.62px;background:#f3f3f3"></div>
<div class="t" style="left:945.00px;width:40px;text-align:center;top:354.21px;font-size:7.3px;color:#404347;font-weight:400;">4</div>
<div style="position:absolute;left:64px;top:390.14px;width:920px;height:1px;background:#f1f1f1"></div>
<div class="t" style="left:73.6px;top:372.83px;font-size:7.39px;color:#404347;font-weight:400;">Nurse 2</div>
<div style="position:absolute;left:138.2px;top:372.52px;width:1px;height:17.62px;background:#f3f3f3"></div>
<div class="t" style="left:144.65px;width:40px;text-align:center;top:372.83px;font-size:7.3px;color:#5f6368;font-weight:400;">-</div>
<div style="position:absolute;left:192.5px;top:372.52px;width:1px;height:17.62px;background:#f3f3f3"></div>
<div style="position:absolute;left:193.5px;top:373.02px;width:54.599999999999994px;height:17.12px;background:#c8e0c0"></div>
<div class="t" style="left:199.60px;width:40px;text-align:center;top:372.83px;font-size:7.3px;color:#202124;font-weight:400;">1</div>
<div style="position:absolute;left:248.1px;top:372.52px;width:1px;height:17.62px;background:#f3f3f3"></div>
<div class="t" style="left:254.60px;width:40px;text-align:center;top:372.83px;font-size:7.3px;color:#5f6368;font-weight:400;">-</div>
<div style="position:absolute;left:302.5px;top:372.52px;width:1px;height:17.62px;background:#f3f3f3"></div>
<div style="position:absolute;left:303.5px;top:373.02px;width:53.60000000000002px;height:17.12px;background:#c8e0c0"></div>
<div class="t" style="left:309.10px;width:40px;text-align:center;top:372.83px;font-size:7.3px;color:#202124;font-weight:400;">1</div>
<div style="position:absolute;left:357.1px;top:372.52px;width:1px;height:17.62px;background:#f3f3f3"></div>
<div class="t" style="left:363.40px;width:40px;text-align:center;top:372.83px;font-size:7.3px;color:#5f6368;font-weight:400;">-</div>
<div style="position:absolute;left:411.1px;top:372.52px;width:1px;height:17.62px;background:#f3f3f3"></div>
<div class="t" style="left:417.60px;width:40px;text-align:center;top:372.83px;font-size:7.3px;color:#5f6368;font-weight:400;">-</div>
<div style="position:absolute;left:465.5px;top:372.52px;width:1px;height:17.62px;background:#f3f3f3"></div>
<div style="position:absolute;left:466.5px;top:373.02px;width:53.60000000000002px;height:17.12px;background:#fcdd88"></div>
<div class="t" style="left:472.10px;width:40px;text-align:center;top:372.83px;font-size:7.3px;color:#202124;font-weight:400;">1</div>
<div style="position:absolute;left:520.1px;top:372.52px;width:1px;height:17.62px;background:#f3f3f3"></div>
<div class="t" style="left:526.85px;width:40px;text-align:center;top:372.83px;font-size:7.3px;color:#5f6368;font-weight:400;">-</div>
<div style="position:absolute;left:575.0px;top:372.52px;width:1px;height:17.62px;background:#f3f3f3"></div>
<div class="t" style="left:581.05px;width:40px;text-align:center;top:372.83px;font-size:7.3px;color:#5f6368;font-weight:400;">-</div>
<div style="position:absolute;left:628.5px;top:372.52px;width:1px;height:17.62px;background:#f3f3f3"></div>
<div class="t" style="left:635.40px;width:40px;text-align:center;top:372.83px;font-size:7.3px;color:#5f6368;font-weight:400;">-</div>
<div style="position:absolute;left:683.7px;top:372.52px;width:1px;height:17.62px;background:#f3f3f3"></div>
<div class="t" style="left:690.50px;width:40px;text-align:center;top:372.83px;font-size:7.3px;color:#5f6368;font-weight:400;">-</div>
<div style="position:absolute;left:738.7px;top:372.52px;width:1px;height:17.62px;background:#f3f3f3"></div>
<div style="position:absolute;left:739.7px;top:373.02px;width:55.799999999999955px;height:17.12px;background:#a9cafb"></div>
<div class="t" style="left:746.40px;width:40px;text-align:center;top:372.83px;font-size:7.3px;color:#202124;font-weight:400;">1</div>
<div style="position:absolute;left:795.5px;top:372.52px;width:1px;height:17.62px;background:#f3f3f3"></div>
<div class="t" style="left:802.00px;width:40px;text-align:center;top:372.83px;font-size:7.3px;color:#5f6368;font-weight:400;">-</div>
<div style="position:absolute;left:849.9px;top:372.52px;width:1px;height:17.62px;background:#f3f3f3"></div>
<div class="t" style="left:855.20px;width:40px;text-align:center;top:372.83px;font-size:7.3px;color:#5f6368;font-weight:400;">-</div>
<div style="position:absolute;left:901.9px;top:372.52px;width:1px;height:17.62px;background:#f3f3f3"></div>
<div class="t" style="left:904.20px;width:40px;text-align:center;top:372.83px;font-size:7.3px;color:#404347;font-weight:400;">32</div>
<div style="position:absolute;left:945.5px;top:372.52px;width:1px;height:17.62px;background:#f3f3f3"></div>
<div class="t" style="left:945.00px;width:40px;text-align:center;top:372.83px;font-size:7.3px;color:#404347;font-weight:400;">4</div>
<div style="position:absolute;left:64px;top:408.76px;width:920px;height:1px;background:#f1f1f1"></div>
<div class="t" style="left:73.6px;top:391.45px;font-size:7.39px;color:#404347;font-weight:400;">Nurse 3</div>
<div style="position:absolute;left:138.2px;top:391.14px;width:1px;height:17.62px;background:#f3f3f3"></div>
<div style="position:absolute;left:139.2px;top:391.64px;width:53.30000000000001px;height:17.12px;background:#c8e0c0"></div>
<div class="t" style="left:144.65px;width:40px;text-align:center;top:391.45px;font-size:7.3px;color:#202124;font-weight:400;">1</div>
<div style="position:absolute;left:192.5px;top:391.14px;width:1px;height:17.62px;background:#f3f3f3"></div>
<div class="t" style="left:199.60px;width:40px;text-align:center;top:391.45px;font-size:7.3px;color:#5f6368;font-weight:400;">-</div>
<div style="position:absolute;left:248.1px;top:391.14px;width:1px;height:17.62px;background:#f3f3f3"></div>
<div class="t" style="left:254.60px;width:40px;text-align:center;top:391.45px;font-size:7.3px;color:#5f6368;font-weight:400;">-</div>
<div style="position:absolute;left:302.5px;top:391.14px;width:1px;height:17.62px;background:#f3f3f3"></div>
<div class="t" style="left:309.10px;width:40px;text-align:center;top:391.45px;font-size:7.3px;color:#5f6368;font-weight:400;">-</div>
<div style="position:absolute;left:357.1px;top:391.14px;width:1px;height:17.62px;background:#f3f3f3"></div>
<div style="position:absolute;left:358.1px;top:391.64px;width:53.0px;height:17.12px;background:#c8e0c0"></div>
<div class="t" style="left:363.40px;width:40px;text-align:center;top:391.45px;font-size:7.3px;color:#202124;font-weight:400;">1</div>
<div style="position:absolute;left:411.1px;top:391.14px;width:1px;height:17.62px;background:#f3f3f3"></div>
<div class="t" style="left:417.60px;width:40px;text-align:center;top:391.45px;font-size:7.3px;color:#5f6368;font-weight:400;">-</div>
<div style="position:absolute;left:465.5px;top:391.14px;width:1px;height:17.62px;background:#f3f3f3"></div>
<div class="t" style="left:472.10px;width:40px;text-align:center;top:391.45px;font-size:7.3px;color:#5f6368;font-weight:400;">-</div>
<div style="position:absolute;left:520.1px;top:391.14px;width:1px;height:17.62px;background:#f3f3f3"></div>
<div style="position:absolute;left:521.1px;top:391.64px;width:53.89999999999998px;height:17.12px;background:#fcdd88"></div>
<div class="t" style="left:526.85px;width:40px;text-align:center;top:391.45px;font-size:7.3px;color:#202124;font-weight:400;">1</div>
<div style="position:absolute;left:575.0px;top:391.14px;width:1px;height:17.62px;background:#f3f3f3"></div>
<div class="t" style="left:581.05px;width:40px;text-align:center;top:391.45px;font-size:7.3px;color:#5f6368;font-weight:400;">-</div>
<div style="position:absolute;left:628.5px;top:391.14px;width:1px;height:17.62px;background:#f3f3f3"></div>
<div class="t" style="left:635.40px;width:40px;text-align:center;top:391.45px;font-size:7.3px;color:#5f6368;font-weight:400;">-</div>
<div style="position:absolute;left:683.7px;top:391.14px;width:1px;height:17.62px;background:#f3f3f3"></div>
<div class="t" style="left:690.50px;width:40px;text-align:center;top:391.45px;font-size:7.3px;color:#5f6368;font-weight:400;">-</div>
<div style="position:absolute;left:738.7px;top:391.14px;width:1px;height:17.62px;background:#f3f3f3"></div>
<div class="t" style="left:746.40px;width:40px;text-align:center;top:391.45px;font-size:7.3px;color:#5f6368;font-weight:400;">-</div>
<div style="position:absolute;left:795.5px;top:391.14px;width:1px;height:17.62px;background:#f3f3f3"></div>
<div style="position:absolute;left:796.5px;top:391.64px;width:53.39999999999998px;height:17.12px;background:#a9cafb"></div>
<div class="t" style="left:802.00px;width:40px;text-align:center;top:391.45px;font-size:7.3px;color:#202124;font-weight:400;">1</div>
<div style="position:absolute;left:849.9px;top:391.14px;width:1px;height:17.62px;background:#f3f3f3"></div>
<div class="t" style="left:855.20px;width:40px;text-align:center;top:391.45px;font-size:7.3px;color:#5f6368;font-weight:400;">-</div>
<div style="position:absolute;left:901.9px;top:391.14px;width:1px;height:17.62px;background:#f3f3f3"></div>
<div class="t" style="left:904.20px;width:40px;text-align:center;top:391.45px;font-size:7.3px;color:#404347;font-weight:400;">32</div>
<div style="position:absolute;left:945.5px;top:391.14px;width:1px;height:17.62px;background:#f3f3f3"></div>
<div class="t" style="left:945.00px;width:40px;text-align:center;top:391.45px;font-size:7.3px;color:#404347;font-weight:400;">4</div>
<div style="position:absolute;left:64px;top:427.38px;width:920px;height:1px;background:#f1f1f1"></div>
<div class="t" style="left:73.6px;top:410.07px;font-size:7.39px;color:#404347;font-weight:400;">Nurse 4 (M)</div>
<div style="position:absolute;left:138.2px;top:409.76px;width:1px;height:17.62px;background:#f3f3f3"></div>
<div class="t" style="left:144.65px;width:40px;text-align:center;top:410.07px;font-size:7.3px;color:#5f6368;font-weight:400;">-</div>
<div style="position:absolute;left:192.5px;top:409.76px;width:1px;height:17.62px;background:#f3f3f3"></div>
<div style="position:absolute;left:193.5px;top:410.26px;width:54.599999999999994px;height:17.12px;background:#c8e0c0"></div>
<div class="t" style="left:199.60px;width:40px;text-align:center;top:410.07px;font-size:7.3px;color:#202124;font-weight:400;">1</div>
<div style="position:absolute;left:248.1px;top:409.76px;width:1px;height:17.62px;background:#f3f3f3"></div>
<div class="t" style="left:254.60px;width:40px;text-align:center;top:410.07px;font-size:7.3px;color:#5f6368;font-weight:400;">-</div>
<div style="position:absolute;left:302.5px;top:409.76px;width:1px;height:17.62px;background:#f3f3f3"></div>
<div style="position:absolute;left:303.5px;top:410.26px;width:53.60000000000002px;height:17.12px;background:#c8e0c0"></div>
<div class="t" style="left:309.10px;width:40px;text-align:center;top:410.07px;font-size:7.3px;color:#202124;font-weight:400;">1</div>
<div style="position:absolute;left:357.1px;top:409.76px;width:1px;height:17.62px;background:#f3f3f3"></div>
<div class="t" style="left:363.40px;width:40px;text-align:center;top:410.07px;font-size:7.3px;color:#5f6368;font-weight:400;">-</div>
<div style="position:absolute;left:411.1px;top:409.76px;width:1px;height:17.62px;background:#f3f3f3"></div>
<div style="position:absolute;left:412.1px;top:410.26px;width:53.39999999999998px;height:17.12px;background:#fcdd88"></div>
<div class="t" style="left:417.60px;width:40px;text-align:center;top:410.07px;font-size:7.3px;color:#202124;font-weight:400;">1</div>
<div style="position:absolute;left:465.5px;top:409.76px;width:1px;height:17.62px;background:#f3f3f3"></div>
<div class="t" style="left:472.10px;width:40px;text-align:center;top:410.07px;font-size:7.3px;color:#5f6368;font-weight:400;">-</div>
<div style="position:absolute;left:520.1px;top:409.76px;width:1px;height:17.62px;background:#f3f3f3"></div>
<div class="t" style="left:526.85px;width:40px;text-align:center;top:410.07px;font-size:7.3px;color:#5f6368;font-weight:400;">-</div>
<div style="position:absolute;left:575.0px;top:409.76px;width:1px;height:17.62px;background:#f3f3f3"></div>
<div class="t" style="left:581.05px;width:40px;text-align:center;top:410.07px;font-size:7.3px;color:#5f6368;font-weight:400;">-</div>
<div style="position:absolute;left:628.5px;top:409.76px;width:1px;height:17.62px;background:#f3f3f3"></div>
<div class="t" style="left:635.40px;width:40px;text-align:center;top:410.07px;font-size:7.3px;color:#5f6368;font-weight:400;">-</div>
<div style="position:absolute;left:683.7px;top:409.76px;width:1px;height:17.62px;background:#f3f3f3"></div>
<div style="position:absolute;left:684.7px;top:410.26px;width:54.0px;height:17.12px;background:#a9cafb"></div>
<div class="t" style="left:690.50px;width:40px;text-align:center;top:410.07px;font-size:7.3px;color:#202124;font-weight:400;">1</div>
<div style="position:absolute;left:738.7px;top:409.76px;width:1px;height:17.62px;background:#f3f3f3"></div>
<div class="t" style="left:746.40px;width:40px;text-align:center;top:410.07px;font-size:7.3px;color:#5f6368;font-weight:400;">-</div>
<div style="position:absolute;left:795.5px;top:409.76px;width:1px;height:17.62px;background:#f3f3f3"></div>
<div class="t" style="left:802.00px;width:40px;text-align:center;top:410.07px;font-size:7.3px;color:#5f6368;font-weight:400;">-</div>
<div style="position:absolute;left:849.9px;top:409.76px;width:1px;height:17.62px;background:#f3f3f3"></div>
<div class="t" style="left:855.20px;width:40px;text-align:center;top:410.07px;font-size:7.3px;color:#5f6368;font-weight:400;">-</div>
<div style="position:absolute;left:901.9px;top:409.76px;width:1px;height:17.62px;background:#f3f3f3"></div>
<div class="t" style="left:904.20px;width:40px;text-align:center;top:410.07px;font-size:7.3px;color:#404347;font-weight:400;">32</div>
<div style="position:absolute;left:945.5px;top:409.76px;width:1px;height:17.62px;background:#f3f3f3"></div>
<div class="t" style="left:945.00px;width:40px;text-align:center;top:410.07px;font-size:7.3px;color:#404347;font-weight:400;">4</div>
<div style="position:absolute;left:64px;top:446.0px;width:920px;height:1px;background:#f1f1f1"></div>
<div class="t" style="left:73.6px;top:428.69px;font-size:7.39px;color:#404347;font-weight:400;">Nurse 5</div>
<div style="position:absolute;left:138.2px;top:428.38px;width:1px;height:17.62px;background:#f3f3f3"></div>
<div style="position:absolute;left:139.2px;top:428.88px;width:53.30000000000001px;height:17.12px;background:#c8e0c0"></div>
<div class="t" style="left:144.65px;width:40px;text-align:center;top:428.69px;font-size:7.3px;color:#202124;font-weight:400;">1</div>
<div style="position:absolute;left:192.5px;top:428.38px;width:1px;height:17.62px;background:#f3f3f3"></div>
<div class="t" style="left:199.60px;width:40px;text-align:center;top:428.69px;font-size:7.3px;color:#5f6368;font-weight:400;">-</div>
<div style="position:absolute;left:248.1px;top:428.38px;width:1px;height:17.62px;background:#f3f3f3"></div>
<div class="t" style="left:254.60px;width:40px;text-align:center;top:428.69px;font-size:7.3px;color:#5f6368;font-weight:400;">-</div>
<div style="position:absolute;left:302.5px;top:428.38px;width:1px;height:17.62px;background:#f3f3f3"></div>
<div class="t" style="left:309.10px;width:40px;text-align:center;top:428.69px;font-size:7.3px;color:#5f6368;font-weight:400;">-</div>
<div style="position:absolute;left:357.1px;top:428.38px;width:1px;height:17.62px;background:#f3f3f3"></div>
<div class="t" style="left:363.40px;width:40px;text-align:center;top:428.69px;font-size:7.3px;color:#5f6368;font-weight:400;">-</div>
<div style="position:absolute;left:411.1px;top:428.38px;width:1px;height:17.62px;background:#f3f3f3"></div>
<div class="t" style="left:417.60px;width:40px;text-align:center;top:428.69px;font-size:7.3px;color:#5f6368;font-weight:400;">-</div>
<div style="position:absolute;left:465.5px;top:428.38px;width:1px;height:17.62px;background:#f3f3f3"></div>
<div style="position:absolute;left:466.5px;top:428.88px;width:53.60000000000002px;height:17.12px;background:#fcdd88"></div>
<div class="t" style="left:472.10px;width:40px;text-align:center;top:428.69px;font-size:7.3px;color:#202124;font-weight:400;">1</div>
<div style="position:absolute;left:520.1px;top:428.38px;width:1px;height:17.62px;background:#f3f3f3"></div>
<div class="t" style="left:526.85px;width:40px;text-align:center;top:428.69px;font-size:7.3px;color:#5f6368;font-weight:400;">-</div>
<div style="position:absolute;left:575.0px;top:428.38px;width:1px;height:17.62px;background:#f3f3f3"></div>
<div class="t" style="left:581.05px;width:40px;text-align:center;top:428.69px;font-size:7.3px;color:#5f6368;font-weight:400;">-</div>
<div style="position:absolute;left:628.5px;top:428.38px;width:1px;height:17.62px;background:#f3f3f3"></div>
<div class="t" style="left:635.40px;width:40px;text-align:center;top:428.69px;font-size:7.3px;color:#5f6368;font-weight:400;">-</div>
<div style="position:absolute;left:683.7px;top:428.38px;width:1px;height:17.62px;background:#f3f3f3"></div>
<div class="t" style="left:690.50px;width:40px;text-align:center;top:428.69px;font-size:7.3px;color:#5f6368;font-weight:400;">-</div>
<div style="position:absolute;left:738.7px;top:428.38px;width:1px;height:17.62px;background:#f3f3f3"></div>
<div class="t" style="left:746.40px;width:40px;text-align:center;top:428.69px;font-size:7.3px;color:#5f6368;font-weight:400;">-</div>
<div style="position:absolute;left:795.5px;top:428.38px;width:1px;height:17.62px;background:#f3f3f3"></div>
<div class="t" style="left:802.00px;width:40px;text-align:center;top:428.69px;font-size:7.3px;color:#5f6368;font-weight:400;">-</div>
<div style="position:absolute;left:849.9px;top:428.38px;width:1px;height:17.62px;background:#f3f3f3"></div>
<div style="position:absolute;left:850.9px;top:428.88px;width:51.0px;height:17.12px;background:#a9cafb"></div>
<div class="t" style="left:855.20px;width:40px;text-align:center;top:428.69px;font-size:7.3px;color:#202124;font-weight:400;">1</div>
<div style="position:absolute;left:901.9px;top:428.38px;width:1px;height:17.62px;background:#f3f3f3"></div>
<div class="t" style="left:904.20px;width:40px;text-align:center;top:428.69px;font-size:7.3px;color:#404347;font-weight:400;">24</div>
<div style="position:absolute;left:945.5px;top:428.38px;width:1px;height:17.62px;background:#f3f3f3"></div>
<div class="t" style="left:945.00px;width:40px;text-align:center;top:428.69px;font-size:7.3px;color:#404347;font-weight:400;">3</div>
<div style="position:absolute;left:64px;top:464.9px;width:920px;height:1px;background:#f1f1f1"></div>
<div class="t" style="left:73.6px;top:445.75px;font-size:7.39px;color:#404347;font-weight:400;">...</div>
<div style="position:absolute;left:138.2px;top:447.0px;width:1px;height:17.9px;background:#f3f3f3"></div>
<div style="position:absolute;left:192.5px;top:447.0px;width:1px;height:17.9px;background:#f3f3f3"></div>
<div style="position:absolute;left:248.1px;top:447.0px;width:1px;height:17.9px;background:#f3f3f3"></div>
<div style="position:absolute;left:302.5px;top:447.0px;width:1px;height:17.9px;background:#f3f3f3"></div>
<div style="position:absolute;left:357.1px;top:447.0px;width:1px;height:17.9px;background:#f3f3f3"></div>
<div style="position:absolute;left:411.1px;top:447.0px;width:1px;height:17.9px;background:#f3f3f3"></div>
<div style="position:absolute;left:465.5px;top:447.0px;width:1px;height:17.9px;background:#f3f3f3"></div>
<div style="position:absolute;left:520.1px;top:447.0px;width:1px;height:17.9px;background:#f3f3f3"></div>
<div style="position:absolute;left:575.0px;top:447.0px;width:1px;height:17.9px;background:#f3f3f3"></div>
<div style="position:absolute;left:628.5px;top:447.0px;width:1px;height:17.9px;background:#f3f3f3"></div>
<div style="position:absolute;left:683.7px;top:447.0px;width:1px;height:17.9px;background:#f3f3f3"></div>
<div style="position:absolute;left:738.7px;top:447.0px;width:1px;height:17.9px;background:#f3f3f3"></div>
<div style="position:absolute;left:795.5px;top:447.0px;width:1px;height:17.9px;background:#f3f3f3"></div>
<div style="position:absolute;left:849.9px;top:447.0px;width:1px;height:17.9px;background:#f3f3f3"></div>
<div style="position:absolute;left:901.9px;top:447.0px;width:1px;height:17.9px;background:#f3f3f3"></div>
<div class="t" style="left:904.20px;width:40px;text-align:center;top:447.45px;font-size:7.3px;color:#404347;font-weight:400;"></div>
<div style="position:absolute;left:945.5px;top:447.0px;width:1px;height:17.9px;background:#f3f3f3"></div>
<div class="t" style="left:945.00px;width:40px;text-align:center;top:447.45px;font-size:7.3px;color:#404347;font-weight:400;"></div>
<div style="position:absolute;left:64px;top:483.52px;width:920px;height:1px;background:#f1f1f1"></div>
<div class="t" style="left:73.6px;top:466.21px;font-size:7.39px;color:#404347;font-weight:400;">Nurse 16</div>
<div style="position:absolute;left:138.2px;top:465.9px;width:1px;height:17.62px;background:#f3f3f3"></div>
<div class="t" style="left:144.65px;width:40px;text-align:center;top:466.21px;font-size:7.3px;color:#5f6368;font-weight:400;">-</div>
<div style="position:absolute;left:192.5px;top:465.9px;width:1px;height:17.62px;background:#f3f3f3"></div>
<div class="t" style="left:199.60px;width:40px;text-align:center;top:466.21px;font-size:7.3px;color:#5f6368;font-weight:400;">-</div>
<div style="position:absolute;left:248.1px;top:465.9px;width:1px;height:17.62px;background:#f3f3f3"></div>
<div style="position:absolute;left:249.1px;top:466.4px;width:53.400000000000006px;height:17.12px;background:#fcdd88"></div>
<div class="t" style="left:254.60px;width:40px;text-align:center;top:466.21px;font-size:7.3px;color:#202124;font-weight:400;">1</div>
<div style="position:absolute;left:302.5px;top:465.9px;width:1px;height:17.62px;background:#f3f3f3"></div>
<div class="t" style="left:309.10px;width:40px;text-align:center;top:466.21px;font-size:7.3px;color:#5f6368;font-weight:400;">-</div>
<div style="position:absolute;left:357.1px;top:465.9px;width:1px;height:17.62px;background:#f3f3f3"></div>
<div class="t" style="left:363.40px;width:40px;text-align:center;top:466.21px;font-size:7.3px;color:#5f6368;font-weight:400;">-</div>
<div style="position:absolute;left:411.1px;top:465.9px;width:1px;height:17.62px;background:#f3f3f3"></div>
<div class="t" style="left:417.60px;width:40px;text-align:center;top:466.21px;font-size:7.3px;color:#5f6368;font-weight:400;">-</div>
<div style="position:absolute;left:465.5px;top:465.9px;width:1px;height:17.62px;background:#f3f3f3"></div>
<div class="t" style="left:472.10px;width:40px;text-align:center;top:466.21px;font-size:7.3px;color:#5f6368;font-weight:400;">-</div>
<div style="position:absolute;left:520.1px;top:465.9px;width:1px;height:17.62px;background:#f3f3f3"></div>
<div class="t" style="left:526.85px;width:40px;text-align:center;top:466.21px;font-size:7.3px;color:#5f6368;font-weight:400;">-</div>
<div style="position:absolute;left:575.0px;top:465.9px;width:1px;height:17.62px;background:#f3f3f3"></div>
<div class="t" style="left:581.05px;width:40px;text-align:center;top:466.21px;font-size:7.3px;color:#5f6368;font-weight:400;">-</div>
<div style="position:absolute;left:628.5px;top:465.9px;width:1px;height:17.62px;background:#f3f3f3"></div>
<div class="t" style="left:635.40px;width:40px;text-align:center;top:466.21px;font-size:7.3px;color:#5f6368;font-weight:400;">-</div>
<div style="position:absolute;left:683.7px;top:465.9px;width:1px;height:17.62px;background:#f3f3f3"></div>
<div class="t" style="left:690.50px;width:40px;text-align:center;top:466.21px;font-size:7.3px;color:#5f6368;font-weight:400;">-</div>
<div style="position:absolute;left:738.7px;top:465.9px;width:1px;height:17.62px;background:#f3f3f3"></div>
<div style="position:absolute;left:739.7px;top:466.4px;width:55.799999999999955px;height:17.12px;background:#a9cafb"></div>
<div class="t" style="left:746.40px;width:40px;text-align:center;top:466.21px;font-size:7.3px;color:#202124;font-weight:400;">1</div>
<div style="position:absolute;left:795.5px;top:465.9px;width:1px;height:17.62px;background:#f3f3f3"></div>
<div class="t" style="left:802.00px;width:40px;text-align:center;top:466.21px;font-size:7.3px;color:#5f6368;font-weight:400;">-</div>
<div style="position:absolute;left:849.9px;top:465.9px;width:1px;height:17.62px;background:#f3f3f3"></div>
<div class="t" style="left:855.20px;width:40px;text-align:center;top:466.21px;font-size:7.3px;color:#5f6368;font-weight:400;">-</div>
<div style="position:absolute;left:901.9px;top:465.9px;width:1px;height:17.62px;background:#f3f3f3"></div>
<div class="t" style="left:904.20px;width:40px;text-align:center;top:466.21px;font-size:7.3px;color:#404347;font-weight:400;">16</div>
<div style="position:absolute;left:945.5px;top:465.9px;width:1px;height:17.62px;background:#f3f3f3"></div>
<div class="t" style="left:945.00px;width:40px;text-align:center;top:466.21px;font-size:7.3px;color:#404347;font-weight:400;">2</div>
<div style="position:absolute;left:64px;top:502.14px;width:920px;height:1px;background:#f1f1f1"></div>
<div class="t" style="left:73.6px;top:484.83px;font-size:7.39px;color:#404347;font-weight:400;">Nurse 17 (M)</div>
<div style="position:absolute;left:138.2px;top:484.52px;width:1px;height:17.62px;background:#f3f3f3"></div>
<div style="position:absolute;left:139.2px;top:485.02px;width:53.30000000000001px;height:17.12px;background:#c8e0c0"></div>
<div class="t" style="left:144.65px;width:40px;text-align:center;top:484.83px;font-size:7.3px;color:#202124;font-weight:400;">1</div>
<div style="position:absolute;left:192.5px;top:484.52px;width:1px;height:17.62px;background:#f3f3f3"></div>
<div class="t" style="left:199.60px;width:40px;text-align:center;top:484.83px;font-size:7.3px;color:#5f6368;font-weight:400;">-</div>
<div style="position:absolute;left:248.1px;top:484.52px;width:1px;height:17.62px;background:#f3f3f3"></div>
<div class="t" style="left:254.60px;width:40px;text-align:center;top:484.83px;font-size:7.3px;color:#5f6368;font-weight:400;">-</div>
<div style="position:absolute;left:302.5px;top:484.52px;width:1px;height:17.62px;background:#f3f3f3"></div>
<div class="t" style="left:309.10px;width:40px;text-align:center;top:484.83px;font-size:7.3px;color:#5f6368;font-weight:400;">-</div>
<div style="position:absolute;left:357.1px;top:484.52px;width:1px;height:17.62px;background:#f3f3f3"></div>
<div class="t" style="left:363.40px;width:40px;text-align:center;top:484.83px;font-size:7.3px;color:#5f6368;font-weight:400;">-</div>
<div style="position:absolute;left:411.1px;top:484.52px;width:1px;height:17.62px;background:#f3f3f3"></div>
<div class="t" style="left:417.60px;width:40px;text-align:center;top:484.83px;font-size:7.3px;color:#5f6368;font-weight:400;">-</div>
<div style="position:absolute;left:465.5px;top:484.52px;width:1px;height:17.62px;background:#f3f3f3"></div>
<div style="position:absolute;left:466.5px;top:485.02px;width:53.60000000000002px;height:17.12px;background:#fcdd88"></div>
<div class="t" style="left:472.10px;width:40px;text-align:center;top:484.83px;font-size:7.3px;color:#202124;font-weight:400;">1</div>
<div style="position:absolute;left:520.1px;top:484.52px;width:1px;height:17.62px;background:#f3f3f3"></div>
<div class="t" style="left:526.85px;width:40px;text-align:center;top:484.83px;font-size:7.3px;color:#5f6368;font-weight:400;">-</div>
<div style="position:absolute;left:575.0px;top:484.52px;width:1px;height:17.62px;background:#f3f3f3"></div>
<div class="t" style="left:581.05px;width:40px;text-align:center;top:484.83px;font-size:7.3px;color:#5f6368;font-weight:400;">-</div>
<div style="position:absolute;left:628.5px;top:484.52px;width:1px;height:17.62px;background:#f3f3f3"></div>
<div class="t" style="left:635.40px;width:40px;text-align:center;top:484.83px;font-size:7.3px;color:#5f6368;font-weight:400;">-</div>
<div style="position:absolute;left:683.7px;top:484.52px;width:1px;height:17.62px;background:#f3f3f3"></div>
<div style="position:absolute;left:684.7px;top:485.02px;width:54.0px;height:17.12px;background:#a9cafb"></div>
<div class="t" style="left:690.50px;width:40px;text-align:center;top:484.83px;font-size:7.3px;color:#202124;font-weight:400;">1</div>
<div style="position:absolute;left:738.7px;top:484.52px;width:1px;height:17.62px;background:#f3f3f3"></div>
<div class="t" style="left:746.40px;width:40px;text-align:center;top:484.83px;font-size:7.3px;color:#5f6368;font-weight:400;">-</div>
<div style="position:absolute;left:795.5px;top:484.52px;width:1px;height:17.62px;background:#f3f3f3"></div>
<div class="t" style="left:802.00px;width:40px;text-align:center;top:484.83px;font-size:7.3px;color:#5f6368;font-weight:400;">-</div>
<div style="position:absolute;left:849.9px;top:484.52px;width:1px;height:17.62px;background:#f3f3f3"></div>
<div class="t" style="left:855.20px;width:40px;text-align:center;top:484.83px;font-size:7.3px;color:#5f6368;font-weight:400;">-</div>
<div style="position:absolute;left:901.9px;top:484.52px;width:1px;height:17.62px;background:#f3f3f3"></div>
<div class="t" style="left:904.20px;width:40px;text-align:center;top:484.83px;font-size:7.3px;color:#404347;font-weight:400;">24</div>
<div style="position:absolute;left:945.5px;top:484.52px;width:1px;height:17.62px;background:#f3f3f3"></div>
<div class="t" style="left:945.00px;width:40px;text-align:center;top:484.83px;font-size:7.3px;color:#404347;font-weight:400;">3</div>
<div style="position:absolute;left:64px;top:520.76px;width:920px;height:1px;background:#f1f1f1"></div>
<div class="t" style="left:73.6px;top:503.45px;font-size:7.39px;color:#404347;font-weight:400;">Nurse 18</div>
<div style="position:absolute;left:138.2px;top:503.14px;width:1px;height:17.62px;background:#f3f3f3"></div>
<div class="t" style="left:144.65px;width:40px;text-align:center;top:503.45px;font-size:7.3px;color:#5f6368;font-weight:400;">-</div>
<div style="position:absolute;left:192.5px;top:503.14px;width:1px;height:17.62px;background:#f3f3f3"></div>
<div class="t" style="left:199.60px;width:40px;text-align:center;top:503.45px;font-size:7.3px;color:#5f6368;font-weight:400;">-</div>
<div style="position:absolute;left:248.1px;top:503.14px;width:1px;height:17.62px;background:#f3f3f3"></div>
<div class="t" style="left:254.60px;width:40px;text-align:center;top:503.45px;font-size:7.3px;color:#5f6368;font-weight:400;">-</div>
<div style="position:absolute;left:302.5px;top:503.14px;width:1px;height:17.62px;background:#f3f3f3"></div>
<div class="t" style="left:309.10px;width:40px;text-align:center;top:503.45px;font-size:7.3px;color:#5f6368;font-weight:400;">-</div>
<div style="position:absolute;left:357.1px;top:503.14px;width:1px;height:17.62px;background:#f3f3f3"></div>
<div style="position:absolute;left:358.1px;top:503.64px;width:53.0px;height:17.12px;background:#c8e0c0"></div>
<div class="t" style="left:363.40px;width:40px;text-align:center;top:503.45px;font-size:7.3px;color:#202124;font-weight:400;">1</div>
<div style="position:absolute;left:411.1px;top:503.14px;width:1px;height:17.62px;background:#f3f3f3"></div>
<div class="t" style="left:417.60px;width:40px;text-align:center;top:503.45px;font-size:7.3px;color:#5f6368;font-weight:400;">-</div>
<div style="position:absolute;left:465.5px;top:503.14px;width:1px;height:17.62px;background:#f3f3f3"></div>
<div class="t" style="left:472.10px;width:40px;text-align:center;top:503.45px;font-size:7.3px;color:#5f6368;font-weight:400;">-</div>
<div style="position:absolute;left:520.1px;top:503.14px;width:1px;height:17.62px;background:#f3f3f3"></div>
<div style="position:absolute;left:521.1px;top:503.64px;width:53.89999999999998px;height:17.12px;background:#fcdd88"></div>
<div class="t" style="left:526.85px;width:40px;text-align:center;top:503.45px;font-size:7.3px;color:#202124;font-weight:400;">1</div>
<div style="position:absolute;left:575.0px;top:503.14px;width:1px;height:17.62px;background:#f3f3f3"></div>
<div class="t" style="left:581.05px;width:40px;text-align:center;top:503.45px;font-size:7.3px;color:#5f6368;font-weight:400;">-</div>
<div style="position:absolute;left:628.5px;top:503.14px;width:1px;height:17.62px;background:#f3f3f3"></div>
<div class="t" style="left:635.40px;width:40px;text-align:center;top:503.45px;font-size:7.3px;color:#5f6368;font-weight:400;">-</div>
<div style="position:absolute;left:683.7px;top:503.14px;width:1px;height:17.62px;background:#f3f3f3"></div>
<div class="t" style="left:690.50px;width:40px;text-align:center;top:503.45px;font-size:7.3px;color:#5f6368;font-weight:400;">-</div>
<div style="position:absolute;left:738.7px;top:503.14px;width:1px;height:17.62px;background:#f3f3f3"></div>
<div class="t" style="left:746.40px;width:40px;text-align:center;top:503.45px;font-size:7.3px;color:#5f6368;font-weight:400;">-</div>
<div style="position:absolute;left:795.5px;top:503.14px;width:1px;height:17.62px;background:#f3f3f3"></div>
<div class="t" style="left:802.00px;width:40px;text-align:center;top:503.45px;font-size:7.3px;color:#5f6368;font-weight:400;">-</div>
<div style="position:absolute;left:849.9px;top:503.14px;width:1px;height:17.62px;background:#f3f3f3"></div>
<div style="position:absolute;left:850.9px;top:503.64px;width:51.0px;height:17.12px;background:#a9cafb"></div>
<div class="t" style="left:855.20px;width:40px;text-align:center;top:503.45px;font-size:7.3px;color:#202124;font-weight:400;">1</div>
<div style="position:absolute;left:901.9px;top:503.14px;width:1px;height:17.62px;background:#f3f3f3"></div>
<div class="t" style="left:904.20px;width:40px;text-align:center;top:503.45px;font-size:7.3px;color:#404347;font-weight:400;">24</div>
<div style="position:absolute;left:945.5px;top:503.14px;width:1px;height:17.62px;background:#f3f3f3"></div>
<div class="t" style="left:945.00px;width:40px;text-align:center;top:503.45px;font-size:7.3px;color:#404347;font-weight:400;">3</div>
<div style="position:absolute;left:64px;top:539.38px;width:920px;height:1px;background:#f1f1f1"></div>
<div class="t" style="left:73.6px;top:522.07px;font-size:7.39px;color:#404347;font-weight:400;">Nurse 19</div>
<div style="position:absolute;left:138.2px;top:521.76px;width:1px;height:17.62px;background:#f3f3f3"></div>
<div class="t" style="left:144.65px;width:40px;text-align:center;top:522.07px;font-size:7.3px;color:#5f6368;font-weight:400;">-</div>
<div style="position:absolute;left:192.5px;top:521.76px;width:1px;height:17.62px;background:#f3f3f3"></div>
<div style="position:absolute;left:193.5px;top:522.26px;width:54.599999999999994px;height:17.12px;background:#c8e0c0"></div>
<div class="t" style="left:199.60px;width:40px;text-align:center;top:522.07px;font-size:7.3px;color:#202124;font-weight:400;">1</div>
<div style="position:absolute;left:248.1px;top:521.76px;width:1px;height:17.62px;background:#f3f3f3"></div>
<div class="t" style="left:254.60px;width:40px;text-align:center;top:522.07px;font-size:7.3px;color:#5f6368;font-weight:400;">-</div>
<div style="position:absolute;left:302.5px;top:521.76px;width:1px;height:17.62px;background:#f3f3f3"></div>
<div class="t" style="left:309.10px;width:40px;text-align:center;top:522.07px;font-size:7.3px;color:#5f6368;font-weight:400;">-</div>
<div style="position:absolute;left:357.1px;top:521.76px;width:1px;height:17.62px;background:#f3f3f3"></div>
<div class="t" style="left:363.40px;width:40px;text-align:center;top:522.07px;font-size:7.3px;color:#5f6368;font-weight:400;">-</div>
<div style="position:absolute;left:411.1px;top:521.76px;width:1px;height:17.62px;background:#f3f3f3"></div>
<div style="position:absolute;left:412.1px;top:522.26px;width:53.39999999999998px;height:17.12px;background:#fcdd88"></div>
<div class="t" style="left:417.60px;width:40px;text-align:center;top:522.07px;font-size:7.3px;color:#202124;font-weight:400;">1</div>
<div style="position:absolute;left:465.5px;top:521.76px;width:1px;height:17.62px;background:#f3f3f3"></div>
<div class="t" style="left:472.10px;width:40px;text-align:center;top:522.07px;font-size:7.3px;color:#5f6368;font-weight:400;">-</div>
<div style="position:absolute;left:520.1px;top:521.76px;width:1px;height:17.62px;background:#f3f3f3"></div>
<div class="t" style="left:526.85px;width:40px;text-align:center;top:522.07px;font-size:7.3px;color:#5f6368;font-weight:400;">-</div>
<div style="position:absolute;left:575.0px;top:521.76px;width:1px;height:17.62px;background:#f3f3f3"></div>
<div class="t" style="left:581.05px;width:40px;text-align:center;top:522.07px;font-size:7.3px;color:#5f6368;font-weight:400;">-</div>
<div style="position:absolute;left:628.5px;top:521.76px;width:1px;height:17.62px;background:#f3f3f3"></div>
<div class="t" style="left:635.40px;width:40px;text-align:center;top:522.07px;font-size:7.3px;color:#5f6368;font-weight:400;">-</div>
<div style="position:absolute;left:683.7px;top:521.76px;width:1px;height:17.62px;background:#f3f3f3"></div>
<div class="t" style="left:690.50px;width:40px;text-align:center;top:522.07px;font-size:7.3px;color:#5f6368;font-weight:400;">-</div>
<div style="position:absolute;left:738.7px;top:521.76px;width:1px;height:17.62px;background:#f3f3f3"></div>
<div style="position:absolute;left:739.7px;top:522.26px;width:55.799999999999955px;height:17.12px;background:#a9cafb"></div>
<div class="t" style="left:746.40px;width:40px;text-align:center;top:522.07px;font-size:7.3px;color:#202124;font-weight:400;">1</div>
<div style="position:absolute;left:795.5px;top:521.76px;width:1px;height:17.62px;background:#f3f3f3"></div>
<div class="t" style="left:802.00px;width:40px;text-align:center;top:522.07px;font-size:7.3px;color:#5f6368;font-weight:400;">-</div>
<div style="position:absolute;left:849.9px;top:521.76px;width:1px;height:17.62px;background:#f3f3f3"></div>
<div class="t" style="left:855.20px;width:40px;text-align:center;top:522.07px;font-size:7.3px;color:#5f6368;font-weight:400;">-</div>
<div style="position:absolute;left:901.9px;top:521.76px;width:1px;height:17.62px;background:#f3f3f3"></div>
<div class="t" style="left:904.20px;width:40px;text-align:center;top:522.07px;font-size:7.3px;color:#404347;font-weight:400;">24</div>
<div style="position:absolute;left:945.5px;top:521.76px;width:1px;height:17.62px;background:#f3f3f3"></div>
<div class="t" style="left:945.00px;width:40px;text-align:center;top:522.07px;font-size:7.3px;color:#404347;font-weight:400;">3</div>
<div style="position:absolute;left:64px;top:558.0px;width:920px;height:1px;background:#f1f1f1"></div>
<div class="t" style="left:73.6px;top:540.69px;font-size:7.39px;color:#404347;font-weight:400;">Nurse 20 (M)</div>
<div style="position:absolute;left:138.2px;top:540.38px;width:1px;height:17.62px;background:#f3f3f3"></div>
<div class="t" style="left:144.65px;width:40px;text-align:center;top:540.69px;font-size:7.3px;color:#5f6368;font-weight:400;">-</div>
<div style="position:absolute;left:192.5px;top:540.38px;width:1px;height:17.62px;background:#f3f3f3"></div>
<div class="t" style="left:199.60px;width:40px;text-align:center;top:540.69px;font-size:7.3px;color:#5f6368;font-weight:400;">-</div>
<div style="position:absolute;left:248.1px;top:540.38px;width:1px;height:17.62px;background:#f3f3f3"></div>
<div style="position:absolute;left:249.1px;top:540.88px;width:53.400000000000006px;height:17.12px;background:#c8e0c0"></div>
<div class="t" style="left:254.60px;width:40px;text-align:center;top:540.69px;font-size:7.3px;color:#202124;font-weight:400;">1</div>
<div style="position:absolute;left:302.5px;top:540.38px;width:1px;height:17.62px;background:#f3f3f3"></div>
<div class="t" style="left:309.10px;width:40px;text-align:center;top:540.69px;font-size:7.3px;color:#5f6368;font-weight:400;">-</div>
<div style="position:absolute;left:357.1px;top:540.38px;width:1px;height:17.62px;background:#f3f3f3"></div>
<div class="t" style="left:363.40px;width:40px;text-align:center;top:540.69px;font-size:7.3px;color:#5f6368;font-weight:400;">-</div>
<div style="position:absolute;left:411.1px;top:540.38px;width:1px;height:17.62px;background:#f3f3f3"></div>
<div class="t" style="left:417.60px;width:40px;text-align:center;top:540.69px;font-size:7.3px;color:#5f6368;font-weight:400;">-</div>
<div style="position:absolute;left:465.5px;top:540.38px;width:1px;height:17.62px;background:#f3f3f3"></div>
<div style="position:absolute;left:466.5px;top:540.88px;width:53.60000000000002px;height:17.12px;background:#fcdd88"></div>
<div class="t" style="left:472.10px;width:40px;text-align:center;top:540.69px;font-size:7.3px;color:#202124;font-weight:400;">1</div>
<div style="position:absolute;left:520.1px;top:540.38px;width:1px;height:17.62px;background:#f3f3f3"></div>
<div class="t" style="left:526.85px;width:40px;text-align:center;top:540.69px;font-size:7.3px;color:#5f6368;font-weight:400;">-</div>
<div style="position:absolute;left:575.0px;top:540.38px;width:1px;height:17.62px;background:#f3f3f3"></div>
<div class="t" style="left:581.05px;width:40px;text-align:center;top:540.69px;font-size:7.3px;color:#5f6368;font-weight:400;">-</div>
<div style="position:absolute;left:628.5px;top:540.38px;width:1px;height:17.62px;background:#f3f3f3"></div>
<div class="t" style="left:635.40px;width:40px;text-align:center;top:540.69px;font-size:7.3px;color:#5f6368;font-weight:400;">-</div>
<div style="position:absolute;left:683.7px;top:540.38px;width:1px;height:17.62px;background:#f3f3f3"></div>
<div style="position:absolute;left:684.7px;top:540.88px;width:54.0px;height:17.12px;background:#a9cafb"></div>
<div class="t" style="left:690.50px;width:40px;text-align:center;top:540.69px;font-size:7.3px;color:#202124;font-weight:400;">1</div>
<div style="position:absolute;left:738.7px;top:540.38px;width:1px;height:17.62px;background:#f3f3f3"></div>
<div class="t" style="left:746.40px;width:40px;text-align:center;top:540.69px;font-size:7.3px;color:#5f6368;font-weight:400;">-</div>
<div style="position:absolute;left:795.5px;top:540.38px;width:1px;height:17.62px;background:#f3f3f3"></div>
<div class="t" style="left:802.00px;width:40px;text-align:center;top:540.69px;font-size:7.3px;color:#5f6368;font-weight:400;">-</div>
<div style="position:absolute;left:849.9px;top:540.38px;width:1px;height:17.62px;background:#f3f3f3"></div>
<div class="t" style="left:855.20px;width:40px;text-align:center;top:540.69px;font-size:7.3px;color:#5f6368;font-weight:400;">-</div>
<div style="position:absolute;left:901.9px;top:540.38px;width:1px;height:17.62px;background:#f3f3f3"></div>
<div class="t" style="left:904.20px;width:40px;text-align:center;top:540.69px;font-size:7.3px;color:#404347;font-weight:400;">24</div>
<div style="position:absolute;left:945.5px;top:540.38px;width:1px;height:17.62px;background:#f3f3f3"></div>
<div class="t" style="left:945.00px;width:40px;text-align:center;top:540.69px;font-size:7.3px;color:#404347;font-weight:400;">3</div>
<div style="position:absolute;left:64px;top:583.5px;width:920px;height:1px;background:#f1f1f1"></div>
<div class="t" style="left:73.6px;top:562.80px;font-size:7.39px;color:#232528;font-weight:400;-webkit-text-stroke:0.22px currentColor">Demand Met</div>
<div style="position:absolute;left:138.2px;top:559.0px;width:1px;height:24.5px;background:#f8f8f8"></div>
<svg style="left:160.15px;top:568.55px" width="9" height="7" viewBox="0 0 9 7"><polyline points="0.7,3.6 3.2,6 8.3,0.8" fill="none" stroke="#2e9e48" stroke-width="1.2" stroke-linecap="round" stroke-linejoin="round"/></svg>
<div style="position:absolute;left:192.5px;top:559.0px;width:1px;height:24.5px;background:#f8f8f8"></div>
<svg style="left:215.10px;top:568.55px" width="9" height="7" viewBox="0 0 9 7"><polyline points="0.7,3.6 3.2,6 8.3,0.8" fill="none" stroke="#2e9e48" stroke-width="1.2" stroke-linecap="round" stroke-linejoin="round"/></svg>
<div style="position:absolute;left:248.1px;top:559.0px;width:1px;height:24.5px;background:#f8f8f8"></div>
<svg style="left:270.10px;top:568.55px" width="9" height="7" viewBox="0 0 9 7"><polyline points="0.7,3.6 3.2,6 8.3,0.8" fill="none" stroke="#2e9e48" stroke-width="1.2" stroke-linecap="round" stroke-linejoin="round"/></svg>
<div style="position:absolute;left:302.5px;top:559.0px;width:1px;height:24.5px;background:#f8f8f8"></div>
<svg style="left:324.60px;top:568.55px" width="9" height="7" viewBox="0 0 9 7"><polyline points="0.7,3.6 3.2,6 8.3,0.8" fill="none" stroke="#2e9e48" stroke-width="1.2" stroke-linecap="round" stroke-linejoin="round"/></svg>
<div style="position:absolute;left:357.1px;top:559.0px;width:1px;height:24.5px;background:#f8f8f8"></div>
<svg style="left:378.90px;top:568.55px" width="9" height="7" viewBox="0 0 9 7"><polyline points="0.7,3.6 3.2,6 8.3,0.8" fill="none" stroke="#2e9e48" stroke-width="1.2" stroke-linecap="round" stroke-linejoin="round"/></svg>
<div style="position:absolute;left:411.1px;top:559.0px;width:1px;height:24.5px;background:#f8f8f8"></div>
<svg style="left:433.10px;top:568.55px" width="9" height="7" viewBox="0 0 9 7"><polyline points="0.7,3.6 3.2,6 8.3,0.8" fill="none" stroke="#2e9e48" stroke-width="1.2" stroke-linecap="round" stroke-linejoin="round"/></svg>
<div style="position:absolute;left:465.5px;top:559.0px;width:1px;height:24.5px;background:#f8f8f8"></div>
<svg style="left:487.60px;top:568.55px" width="9" height="7" viewBox="0 0 9 7"><polyline points="0.7,3.6 3.2,6 8.3,0.8" fill="none" stroke="#2e9e48" stroke-width="1.2" stroke-linecap="round" stroke-linejoin="round"/></svg>
<div style="position:absolute;left:520.1px;top:559.0px;width:1px;height:24.5px;background:#f8f8f8"></div>
<svg style="left:542.35px;top:568.55px" width="9" height="7" viewBox="0 0 9 7"><polyline points="0.7,3.6 3.2,6 8.3,0.8" fill="none" stroke="#2e9e48" stroke-width="1.2" stroke-linecap="round" stroke-linejoin="round"/></svg>
<div style="position:absolute;left:575.0px;top:559.0px;width:1px;height:24.5px;background:#f8f8f8"></div>
<svg style="left:596.55px;top:568.55px" width="9" height="7" viewBox="0 0 9 7"><polyline points="0.7,3.6 3.2,6 8.3,0.8" fill="none" stroke="#2e9e48" stroke-width="1.2" stroke-linecap="round" stroke-linejoin="round"/></svg>
<div style="position:absolute;left:628.5px;top:559.0px;width:1px;height:24.5px;background:#f8f8f8"></div>
<svg style="left:650.90px;top:568.55px" width="9" height="7" viewBox="0 0 9 7"><polyline points="0.7,3.6 3.2,6 8.3,0.8" fill="none" stroke="#2e9e48" stroke-width="1.2" stroke-linecap="round" stroke-linejoin="round"/></svg>
<div style="position:absolute;left:683.7px;top:559.0px;width:1px;height:24.5px;background:#f8f8f8"></div>
<svg style="left:706.00px;top:568.55px" width="9" height="7" viewBox="0 0 9 7"><polyline points="0.7,3.6 3.2,6 8.3,0.8" fill="none" stroke="#2e9e48" stroke-width="1.2" stroke-linecap="round" stroke-linejoin="round"/></svg>
<div style="position:absolute;left:738.7px;top:559.0px;width:1px;height:24.5px;background:#f8f8f8"></div>
<svg style="left:761.90px;top:568.55px" width="9" height="7" viewBox="0 0 9 7"><polyline points="0.7,3.6 3.2,6 8.3,0.8" fill="none" stroke="#2e9e48" stroke-width="1.2" stroke-linecap="round" stroke-linejoin="round"/></svg>
<div style="position:absolute;left:795.5px;top:559.0px;width:1px;height:24.5px;background:#f8f8f8"></div>
<svg style="left:817.50px;top:568.55px" width="9" height="7" viewBox="0 0 9 7"><polyline points="0.7,3.6 3.2,6 8.3,0.8" fill="none" stroke="#2e9e48" stroke-width="1.2" stroke-linecap="round" stroke-linejoin="round"/></svg>
<div style="position:absolute;left:849.9px;top:559.0px;width:1px;height:24.5px;background:#f8f8f8"></div>
<svg style="left:870.70px;top:568.55px" width="9" height="7" viewBox="0 0 9 7"><polyline points="0.7,3.6 3.2,6 8.3,0.8" fill="none" stroke="#2e9e48" stroke-width="1.2" stroke-linecap="round" stroke-linejoin="round"/></svg>
<div style="position:absolute;left:901.9px;top:559.0px;width:1px;height:24.5px;background:#f8f8f8"></div>
<div style="position:absolute;left:945.5px;top:559.0px;width:1px;height:24.5px;background:#f8f8f8"></div>
<div style="position:absolute;left:64px;top:605.5px;width:920px;height:1px;background:#f1f1f1"></div>
<div class="t" style="left:73.6px;top:587.10px;font-size:7.39px;color:#404347;font-weight:400;">Total Nurses</div>
<div style="position:absolute;left:138.2px;top:584.5px;width:1px;height:21px;background:#f8f8f8"></div>
<div class="t" style="left:144.65px;width:40px;text-align:center;top:587.10px;font-size:7.3px;color:#202124;font-weight:400;">5</div>
<div style="position:absolute;left:192.5px;top:584.5px;width:1px;height:21px;background:#f8f8f8"></div>
<div class="t" style="left:199.60px;width:40px;text-align:center;top:587.10px;font-size:7.3px;color:#202124;font-weight:400;">5</div>
<div style="position:absolute;left:248.1px;top:584.5px;width:1px;height:21px;background:#f8f8f8"></div>
<div class="t" style="left:254.60px;width:40px;text-align:center;top:587.10px;font-size:7.3px;color:#202124;font-weight:400;">5</div>
<div style="position:absolute;left:302.5px;top:584.5px;width:1px;height:21px;background:#f8f8f8"></div>
<div class="t" style="left:309.10px;width:40px;text-align:center;top:587.10px;font-size:7.3px;color:#202124;font-weight:400;">5</div>
<div style="position:absolute;left:357.1px;top:584.5px;width:1px;height:21px;background:#f8f8f8"></div>
<div class="t" style="left:363.40px;width:40px;text-align:center;top:587.10px;font-size:7.3px;color:#202124;font-weight:400;">5</div>
<div style="position:absolute;left:411.1px;top:584.5px;width:1px;height:21px;background:#f8f8f8"></div>
<div class="t" style="left:417.60px;width:40px;text-align:center;top:587.10px;font-size:7.3px;color:#202124;font-weight:400;">5</div>
<div style="position:absolute;left:465.5px;top:584.5px;width:1px;height:21px;background:#f8f8f8"></div>
<div class="t" style="left:472.10px;width:40px;text-align:center;top:587.10px;font-size:7.3px;color:#202124;font-weight:400;">5</div>
<div style="position:absolute;left:520.1px;top:584.5px;width:1px;height:21px;background:#f8f8f8"></div>
<div class="t" style="left:526.85px;width:40px;text-align:center;top:587.10px;font-size:7.3px;color:#202124;font-weight:400;">5</div>
<div style="position:absolute;left:575.0px;top:584.5px;width:1px;height:21px;background:#f8f8f8"></div>
<div class="t" style="left:581.05px;width:40px;text-align:center;top:587.10px;font-size:7.3px;color:#202124;font-weight:400;">5</div>
<div style="position:absolute;left:628.5px;top:584.5px;width:1px;height:21px;background:#f8f8f8"></div>
<div class="t" style="left:635.40px;width:40px;text-align:center;top:587.10px;font-size:7.3px;color:#202124;font-weight:400;">5</div>
<div style="position:absolute;left:683.7px;top:584.5px;width:1px;height:21px;background:#f8f8f8"></div>
<div class="t" style="left:690.50px;width:40px;text-align:center;top:587.10px;font-size:7.3px;color:#202124;font-weight:400;">5</div>
<div style="position:absolute;left:738.7px;top:584.5px;width:1px;height:21px;background:#f8f8f8"></div>
<div class="t" style="left:746.40px;width:40px;text-align:center;top:587.10px;font-size:7.3px;color:#202124;font-weight:400;">5</div>
<div style="position:absolute;left:795.5px;top:584.5px;width:1px;height:21px;background:#f8f8f8"></div>
<div class="t" style="left:802.00px;width:40px;text-align:center;top:587.10px;font-size:7.3px;color:#202124;font-weight:400;">5</div>
<div style="position:absolute;left:849.9px;top:584.5px;width:1px;height:21px;background:#f8f8f8"></div>
<div class="t" style="left:855.20px;width:40px;text-align:center;top:587.10px;font-size:7.3px;color:#202124;font-weight:400;">5</div>
<div style="position:absolute;left:901.9px;top:584.5px;width:1px;height:21px;background:#f8f8f8"></div>
<div style="position:absolute;left:945.5px;top:584.5px;width:1px;height:21px;background:#f8f8f8"></div>
<div class="t" style="left:73.6px;top:609.20px;font-size:7.39px;color:#404347;font-weight:400;">Managers</div>
<div style="position:absolute;left:138.2px;top:606.5px;width:1px;height:23.5px;background:#f8f8f8"></div>
<div class="t" style="left:144.65px;width:40px;text-align:center;top:609.20px;font-size:7.3px;color:#202124;font-weight:400;">1</div>
<div style="position:absolute;left:192.5px;top:606.5px;width:1px;height:23.5px;background:#f8f8f8"></div>
<div class="t" style="left:199.60px;width:40px;text-align:center;top:609.20px;font-size:7.3px;color:#202124;font-weight:400;">1</div>
<div style="position:absolute;left:248.1px;top:606.5px;width:1px;height:23.5px;background:#f8f8f8"></div>
<div class="t" style="left:254.60px;width:40px;text-align:center;top:609.20px;font-size:7.3px;color:#202124;font-weight:400;">1</div>
<div style="position:absolute;left:302.5px;top:606.5px;width:1px;height:23.5px;background:#f8f8f8"></div>
<div class="t" style="left:309.10px;width:40px;text-align:center;top:609.20px;font-size:7.3px;color:#202124;font-weight:400;">1</div>
<div style="position:absolute;left:357.1px;top:606.5px;width:1px;height:23.5px;background:#f8f8f8"></div>
<div class="t" style="left:363.40px;width:40px;text-align:center;top:609.20px;font-size:7.3px;color:#202124;font-weight:400;">1</div>
<div style="position:absolute;left:411.1px;top:606.5px;width:1px;height:23.5px;background:#f8f8f8"></div>
<div class="t" style="left:417.60px;width:40px;text-align:center;top:609.20px;font-size:7.3px;color:#202124;font-weight:400;">1</div>
<div style="position:absolute;left:465.5px;top:606.5px;width:1px;height:23.5px;background:#f8f8f8"></div>
<div class="t" style="left:472.10px;width:40px;text-align:center;top:609.20px;font-size:7.3px;color:#202124;font-weight:400;">1</div>
<div style="position:absolute;left:520.1px;top:606.5px;width:1px;height:23.5px;background:#f8f8f8"></div>
<div class="t" style="left:526.85px;width:40px;text-align:center;top:609.20px;font-size:7.3px;color:#202124;font-weight:400;">1</div>
<div style="position:absolute;left:575.0px;top:606.5px;width:1px;height:23.5px;background:#f8f8f8"></div>
<div class="t" style="left:581.05px;width:40px;text-align:center;top:609.20px;font-size:7.3px;color:#202124;font-weight:400;">1</div>
<div style="position:absolute;left:628.5px;top:606.5px;width:1px;height:23.5px;background:#f8f8f8"></div>
<div class="t" style="left:635.40px;width:40px;text-align:center;top:609.20px;font-size:7.3px;color:#202124;font-weight:400;">1</div>
<div style="position:absolute;left:683.7px;top:606.5px;width:1px;height:23.5px;background:#f8f8f8"></div>
<div class="t" style="left:690.50px;width:40px;text-align:center;top:609.20px;font-size:7.3px;color:#202124;font-weight:400;">1</div>
<div style="position:absolute;left:738.7px;top:606.5px;width:1px;height:23.5px;background:#f8f8f8"></div>
<div class="t" style="left:746.40px;width:40px;text-align:center;top:609.20px;font-size:7.3px;color:#202124;font-weight:400;">1</div>
<div style="position:absolute;left:795.5px;top:606.5px;width:1px;height:23.5px;background:#f8f8f8"></div>
<div class="t" style="left:802.00px;width:40px;text-align:center;top:609.20px;font-size:7.3px;color:#202124;font-weight:400;">1</div>
<div style="position:absolute;left:849.9px;top:606.5px;width:1px;height:23.5px;background:#f8f8f8"></div>
<div class="t" style="left:855.20px;width:40px;text-align:center;top:609.20px;font-size:7.3px;color:#202124;font-weight:400;">1</div>
<div style="position:absolute;left:901.9px;top:606.5px;width:1px;height:23.5px;background:#f8f8f8"></div>
<div style="position:absolute;left:945.5px;top:606.5px;width:1px;height:23.5px;background:#f8f8f8"></div>
</body></html>
